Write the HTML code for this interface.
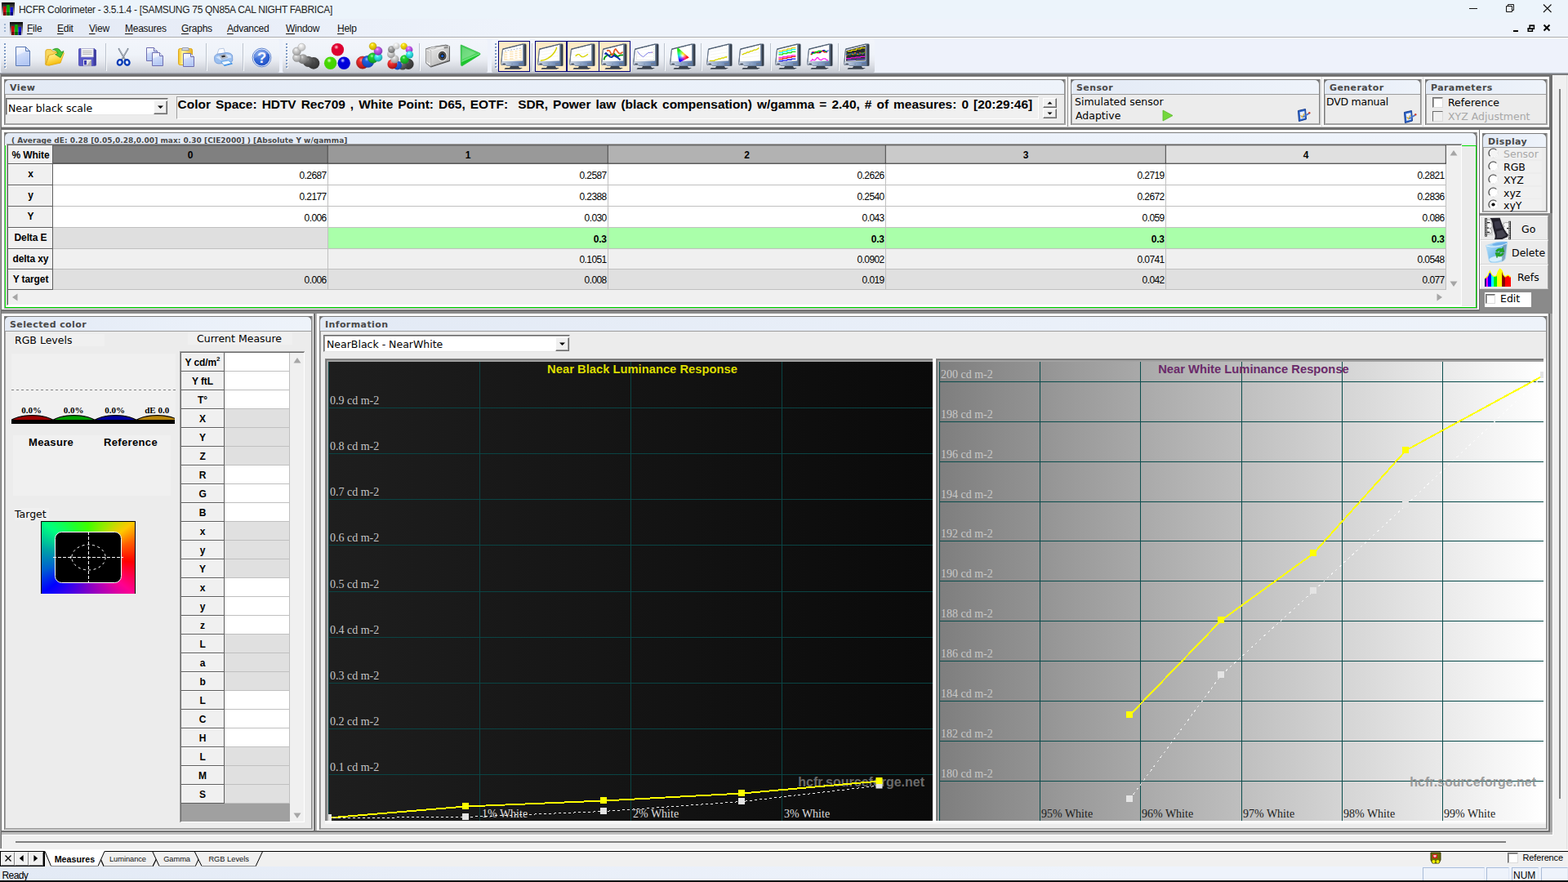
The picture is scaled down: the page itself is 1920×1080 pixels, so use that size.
<!DOCTYPE html>
<html><head><meta charset="utf-8"><title>HCFR Colorimeter - 3.5.1.4 - [SAMSUNG 75 QN85A CAL NIGHT FABRICA]</title>
<style>
html,body{margin:0;padding:0;width:1920px;height:1080px;overflow:hidden;background:#fff}
#root{position:relative;width:1920px;height:1080px;overflow:hidden;font-family:"Liberation Sans",sans-serif}
#root div{position:absolute;box-sizing:border-box}
.t{white-space:nowrap;line-height:1;color:#000}
.ui{font-family:"Liberation Sans",sans-serif}
.dv{font-family:"DejaVu Sans","Liberation Sans",sans-serif}
.sf{font-family:"Liberation Serif",serif}
.b{font-weight:bold}
u{text-decoration:underline;text-underline-offset:2px}
</style></head><body><div id="root">
<div style="left:0px;top:0px;width:1920px;height:23px;background:#ecf4fb;"></div>
<svg style="position:absolute;left:2px;top:3px;" width="16" height="16" viewBox="0 0 16 16"><defs><linearGradient id="ig2" x1="0" y1="0" x2="0" y2="1"><stop offset="0" stop-color="#000"/><stop offset="1" stop-color="#d8d8d8"/></linearGradient></defs>
<rect x="0" y="0" width="16" height="16" fill="url(#ig2)"/>
<rect x="2" y="5" width="3.4" height="11" fill="#c80000"/><rect x="2" y="12" width="3.4" height="4" fill="#700000"/>
<rect x="6.3" y="3" width="3.4" height="13" fill="#00b000"/><rect x="6.3" y="12" width="3.4" height="4" fill="#006000"/>
<rect x="10.6" y="6" width="3.4" height="10" fill="#1010d0"/><rect x="10.6" y="12" width="3.4" height="4" fill="#000080"/></svg>
<div class="t ui" style="left:23px;top:6px;font-size:12px;letter-spacing:-0.31px;color:#1c1c1c">HCFR Colorimeter - 3.5.1.4 - [SAMSUNG 75 QN85A CAL NIGHT FABRICA]</div>
<svg style="position:absolute;left:1795px;top:0px;" width="125" height="22" viewBox="0 0 125 22"><path d="M4 10.5h10" stroke="#111" stroke-width="1" fill="none"/>
<path d="M49.5 7.5h7v7h-7z M51.5 7.5v-2h7v7h-2" stroke="#111" stroke-width="1" fill="none"/>
<path d="M95 5.5l9.5 9.5 M104.5 5.5l-9.5 9.5" stroke="#111" stroke-width="1.1" fill="none"/></svg>
<div style="left:0px;top:23px;width:1920px;height:22px;background:linear-gradient(90deg,#e3e9f4 0px,#e9eef8 300px,#eef3fb 640px);"></div>
<div style="left:0px;top:45px;width:1920px;height:1px;background:#a9abae;"></div>
<div style="left:0px;top:46px;width:1920px;height:44px;background:#eef2fb;"></div>
<div style="left:0px;top:46px;width:1920px;height:1px;background:#ffffff;"></div>
<div style="left:5px;top:29px;width:2px;height:2px;background:#9fb3d0;"></div>
<div style="left:5px;top:33px;width:2px;height:2px;background:#9fb3d0;"></div>
<div style="left:5px;top:37px;width:2px;height:2px;background:#9fb3d0;"></div>
<svg style="position:absolute;left:12px;top:27px;" width="16" height="16" viewBox="0 0 16 16"><defs><linearGradient id="ig12" x1="0" y1="0" x2="0" y2="1"><stop offset="0" stop-color="#000"/><stop offset="1" stop-color="#d8d8d8"/></linearGradient></defs>
<rect x="0" y="0" width="16" height="16" fill="url(#ig12)"/>
<rect x="2" y="5" width="3.4" height="11" fill="#c80000"/><rect x="2" y="12" width="3.4" height="4" fill="#700000"/>
<rect x="6.3" y="3" width="3.4" height="13" fill="#00b000"/><rect x="6.3" y="12" width="3.4" height="4" fill="#006000"/>
<rect x="10.6" y="6" width="3.4" height="10" fill="#1010d0"/><rect x="10.6" y="12" width="3.4" height="4" fill="#000080"/></svg>
<div class="t ui" style="left:33px;top:29px;font-size:12px;letter-spacing:-0.25px;color:#111"><u>F</u>ile</div>
<div class="t ui" style="left:70px;top:29px;font-size:12px;letter-spacing:-0.25px;color:#111"><u>E</u>dit</div>
<div class="t ui" style="left:109px;top:29px;font-size:12px;letter-spacing:-0.25px;color:#111"><u>V</u>iew</div>
<div class="t ui" style="left:153px;top:29px;font-size:12px;letter-spacing:-0.25px;color:#111"><u>M</u>easures</div>
<div class="t ui" style="left:222px;top:29px;font-size:12px;letter-spacing:-0.25px;color:#111"><u>G</u>raphs</div>
<div class="t ui" style="left:278px;top:29px;font-size:12px;letter-spacing:-0.25px;color:#111"><u>A</u>dvanced</div>
<div class="t ui" style="left:350px;top:29px;font-size:12px;letter-spacing:-0.25px;color:#111"><u>W</u>indow</div>
<div class="t ui" style="left:413px;top:29px;font-size:12px;letter-spacing:-0.25px;color:#111"><u>H</u>elp</div>
<svg style="position:absolute;left:1850px;top:27px;" width="54" height="14" viewBox="0 0 54 14"><path d="M3 11h6" stroke="#000" stroke-width="2" fill="none"/>
<path d="M21.2 8.2h5.2v3h-5.2z M23.2 7.4v-3h5.2v3.8h-1.4" stroke="#000" stroke-width="1.5" fill="none"/><path d="M20.5 7.9h6.6 M22.5 4.1h6.6" stroke="#000" stroke-width="1.4"/>
<path d="M40.5 3.5l7 7 M47.5 3.5l-7 7" stroke="#000" stroke-width="2" fill="none"/></svg>
<div style="left:1px;top:48px;width:341px;height:41px;background:linear-gradient(#f2f5fb 0%,#eff3f9 45%,#e9ecf2 63%,#dadde4 80%,#cdd1d8 92%,#c6cad2 100%);border-radius:3px 3px 2px 2px;"></div>
<div style="left:6px;top:54px;width:2px;height:2px;background:#ffffff;"></div>
<div style="left:5px;top:53px;width:2px;height:2px;background:#7e9ac4;"></div>
<div style="left:6px;top:58px;width:2px;height:2px;background:#ffffff;"></div>
<div style="left:5px;top:57px;width:2px;height:2px;background:#7e9ac4;"></div>
<div style="left:6px;top:62px;width:2px;height:2px;background:#ffffff;"></div>
<div style="left:5px;top:61px;width:2px;height:2px;background:#7e9ac4;"></div>
<div style="left:6px;top:66px;width:2px;height:2px;background:#ffffff;"></div>
<div style="left:5px;top:65px;width:2px;height:2px;background:#7e9ac4;"></div>
<div style="left:6px;top:70px;width:2px;height:2px;background:#ffffff;"></div>
<div style="left:5px;top:69px;width:2px;height:2px;background:#7e9ac4;"></div>
<div style="left:6px;top:74px;width:2px;height:2px;background:#ffffff;"></div>
<div style="left:5px;top:73px;width:2px;height:2px;background:#7e9ac4;"></div>
<div style="left:6px;top:78px;width:2px;height:2px;background:#ffffff;"></div>
<div style="left:5px;top:77px;width:2px;height:2px;background:#7e9ac4;"></div>
<div style="left:6px;top:82px;width:2px;height:2px;background:#ffffff;"></div>
<div style="left:5px;top:81px;width:2px;height:2px;background:#7e9ac4;"></div>
<div style="left:346px;top:48px;width:251px;height:41px;background:linear-gradient(#f2f5fb 0%,#eff3f9 45%,#e9ecf2 63%,#dadde4 80%,#cdd1d8 92%,#c6cad2 100%);border-radius:3px 3px 2px 2px;"></div>
<div style="left:351px;top:54px;width:2px;height:2px;background:#ffffff;"></div>
<div style="left:350px;top:53px;width:2px;height:2px;background:#7e9ac4;"></div>
<div style="left:351px;top:58px;width:2px;height:2px;background:#ffffff;"></div>
<div style="left:350px;top:57px;width:2px;height:2px;background:#7e9ac4;"></div>
<div style="left:351px;top:62px;width:2px;height:2px;background:#ffffff;"></div>
<div style="left:350px;top:61px;width:2px;height:2px;background:#7e9ac4;"></div>
<div style="left:351px;top:66px;width:2px;height:2px;background:#ffffff;"></div>
<div style="left:350px;top:65px;width:2px;height:2px;background:#7e9ac4;"></div>
<div style="left:351px;top:70px;width:2px;height:2px;background:#ffffff;"></div>
<div style="left:350px;top:69px;width:2px;height:2px;background:#7e9ac4;"></div>
<div style="left:351px;top:74px;width:2px;height:2px;background:#ffffff;"></div>
<div style="left:350px;top:73px;width:2px;height:2px;background:#7e9ac4;"></div>
<div style="left:351px;top:78px;width:2px;height:2px;background:#ffffff;"></div>
<div style="left:350px;top:77px;width:2px;height:2px;background:#7e9ac4;"></div>
<div style="left:351px;top:82px;width:2px;height:2px;background:#ffffff;"></div>
<div style="left:350px;top:81px;width:2px;height:2px;background:#7e9ac4;"></div>
<div style="left:602px;top:48px;width:469px;height:41px;background:linear-gradient(#f2f5fb 0%,#eff3f9 45%,#e9ecf2 63%,#dadde4 80%,#cdd1d8 92%,#c6cad2 100%);border-radius:3px 3px 2px 2px;"></div>
<div style="left:607px;top:54px;width:2px;height:2px;background:#ffffff;"></div>
<div style="left:606px;top:53px;width:2px;height:2px;background:#7e9ac4;"></div>
<div style="left:607px;top:58px;width:2px;height:2px;background:#ffffff;"></div>
<div style="left:606px;top:57px;width:2px;height:2px;background:#7e9ac4;"></div>
<div style="left:607px;top:62px;width:2px;height:2px;background:#ffffff;"></div>
<div style="left:606px;top:61px;width:2px;height:2px;background:#7e9ac4;"></div>
<div style="left:607px;top:66px;width:2px;height:2px;background:#ffffff;"></div>
<div style="left:606px;top:65px;width:2px;height:2px;background:#7e9ac4;"></div>
<div style="left:607px;top:70px;width:2px;height:2px;background:#ffffff;"></div>
<div style="left:606px;top:69px;width:2px;height:2px;background:#7e9ac4;"></div>
<div style="left:607px;top:74px;width:2px;height:2px;background:#ffffff;"></div>
<div style="left:606px;top:73px;width:2px;height:2px;background:#7e9ac4;"></div>
<div style="left:607px;top:78px;width:2px;height:2px;background:#ffffff;"></div>
<div style="left:606px;top:77px;width:2px;height:2px;background:#7e9ac4;"></div>
<div style="left:607px;top:82px;width:2px;height:2px;background:#ffffff;"></div>
<div style="left:606px;top:81px;width:2px;height:2px;background:#7e9ac4;"></div>
<div style="left:129px;top:53px;width:1px;height:33px;background:#bcc3ce;"></div>
<div style="left:130px;top:54px;width:1px;height:33px;background:#f8fafc;"></div>
<div style="left:252px;top:53px;width:1px;height:33px;background:#bcc3ce;"></div>
<div style="left:253px;top:54px;width:1px;height:33px;background:#f8fafc;"></div>
<div style="left:297px;top:53px;width:1px;height:33px;background:#bcc3ce;"></div>
<div style="left:298px;top:54px;width:1px;height:33px;background:#f8fafc;"></div>
<div style="left:513px;top:53px;width:1px;height:33px;background:#bcc3ce;"></div>
<div style="left:514px;top:54px;width:1px;height:33px;background:#f8fafc;"></div>
<div style="left:651px;top:53px;width:1px;height:33px;background:#bcc3ce;"></div>
<div style="left:652px;top:54px;width:1px;height:33px;background:#f8fafc;"></div>
<div style="left:813px;top:53px;width:1px;height:33px;background:#bcc3ce;"></div>
<div style="left:814px;top:54px;width:1px;height:33px;background:#f8fafc;"></div>
<div style="left:858px;top:53px;width:1px;height:33px;background:#bcc3ce;"></div>
<div style="left:859px;top:54px;width:1px;height:33px;background:#f8fafc;"></div>
<div style="left:943px;top:53px;width:1px;height:33px;background:#bcc3ce;"></div>
<div style="left:944px;top:54px;width:1px;height:33px;background:#f8fafc;"></div>
<div style="left:1026px;top:53px;width:1px;height:33px;background:#bcc3ce;"></div>
<div style="left:1027px;top:54px;width:1px;height:33px;background:#f8fafc;"></div>
<div style="left:610px;top:50px;width:39px;height:38px;background:#fdeac6;border:1px solid #00007a;box-sizing:border-box;"></div>
<div style="left:655px;top:50px;width:39px;height:38px;background:#fdeac6;border:1px solid #00007a;box-sizing:border-box;"></div>
<div style="left:694px;top:50px;width:40px;height:38px;background:#fdeac6;border:1px solid #00007a;box-sizing:border-box;"></div>
<div style="left:733px;top:50px;width:39px;height:38px;background:#fdeac6;border:1px solid #00007a;box-sizing:border-box;"></div>
<div style="left:0px;top:89px;width:1920px;height:1px;background:#a4a9b2;"></div>
<div style="left:0px;top:90px;width:1920px;height:1px;background:#85888e;"></div>
<div style="left:0px;top:91px;width:1920px;height:3px;background:linear-gradient(#747474,#6c6c6c 50%,#8a8a8a);"></div>
<div style="left:0px;top:94px;width:1920px;height:986px;background:#ffffff;"></div>
<div style="left:0px;top:91px;width:1px;height:950px;background:#a0a0a0;"></div>
<div style="left:1px;top:91px;width:1px;height:950px;background:#6e6e6e;"></div>
<div style="left:5px;top:97px;width:1300px;height:57px;background:#7c7c7c;"></div>
<div style="left:6px;top:98px;width:1297px;height:54px;background:#ececec;"></div>
<div style="left:1303px;top:98px;width:1px;height:55px;background:#909090;"></div>
<div style="left:1304px;top:97px;width:1px;height:57px;background:#a8a8a8;"></div>
<div style="left:6px;top:151px;width:1298px;height:2px;background:#a4a4a4;"></div>
<div style="left:5px;top:153px;width:1300px;height:1px;background:#ffffff;"></div>
<div style="left:5px;top:97px;width:1px;height:56px;background:#808080;"></div>
<div style="left:6px;top:115px;width:1px;height:37px;background:#a8a8a8;"></div>
<div style="left:6px;top:98px;width:1297px;height:17px;background:#707070;"></div>
<div style="left:6px;top:98px;width:1297px;height:17px;background:linear-gradient(90deg,#e3eaf5,#eaf0f9 60%,#eef3fa);border-radius:5px 5px 0 0;"></div>
<div style="left:6px;top:115px;width:1297px;height:1px;background:#9c9c9c;"></div>
<div class="t dv b" style="left:12px;top:102px;font-size:11px;letter-spacing:0.4px;color:#484848">View</div>
<div style="left:7px;top:120px;width:199px;height:21px;background:#ffffff;border:1px solid #e6e6e6;border-top:1px solid #6a6a6a;border-left:1px solid #6a6a6a;"></div>
<div style="left:8px;top:121px;width:197px;height:1px;background:#a0a0a0;"></div>
<div style="left:8px;top:121px;width:1px;height:19px;background:#a0a0a0;"></div>
<div class="t dv" style="left:10px;top:127px;font-size:12.5px;">Near black scale</div>
<div style="left:188px;top:123px;width:17px;height:17px;background:#f0f0f0;border:1px solid #fff;border-right-color:#696969;border-bottom-color:#696969;"></div>
<div style="left:189px;top:138px;width:15px;height:1px;background:#a0a0a0;"></div>
<div style="left:203px;top:124px;width:1px;height:15px;background:#a0a0a0;"></div>
<svg style="position:absolute;left:192px;top:129px;" width="9" height="5" viewBox="0 0 8 5"><path d="M0.5 0.5h7l-3.5 3.5z" fill="#000"/></svg>
<div style="left:216px;top:118px;width:1056px;height:28px;background:#f0f0f0;border:1px solid #fff;border-top-color:#a0a0a0;border-left-color:#a0a0a0;"></div>
<div class="t ui b" style="left:217.6px;top:119.7px;font-size:15.45px;word-spacing:1.77px;">Color Space: HDTV Rec709 , White Point: D65, EOTF:&nbsp; SDR, Power law (black compensation) w/gamma = 2.40, # of measures: 0 [20:29:46]</div>
<div style="left:1277px;top:120px;width:17px;height:12px;background:#f0f0f0;border:1px solid #fff;border-right-color:#696969;border-bottom-color:#696969;"></div>
<div style="left:1278px;top:130px;width:15px;height:1px;background:#a0a0a0;"></div>
<div style="left:1292px;top:121px;width:1px;height:10px;background:#a0a0a0;"></div>
<svg style="position:absolute;left:1282px;top:124px;" width="7" height="4" viewBox="0 0 7 4"><path d="M0.5 3.5h6l-3-3z" fill="#000"/></svg>
<div style="left:1277px;top:133px;width:17px;height:12px;background:#f0f0f0;border:1px solid #fff;border-right-color:#696969;border-bottom-color:#696969;"></div>
<div style="left:1278px;top:143px;width:15px;height:1px;background:#a0a0a0;"></div>
<div style="left:1292px;top:134px;width:1px;height:10px;background:#a0a0a0;"></div>
<svg style="position:absolute;left:1282px;top:137px;" width="7" height="4" viewBox="0 0 7 4"><path d="M0.5 0.5h6l-3 3z" fill="#000"/></svg>
<div style="left:1307px;top:94px;width:1px;height:62px;background:#8a8a8a;"></div>
<div style="left:1311px;top:97px;width:306px;height:57px;background:#7c7c7c;"></div>
<div style="left:1312px;top:98px;width:303px;height:54px;background:#ececec;"></div>
<div style="left:1615px;top:98px;width:1px;height:55px;background:#909090;"></div>
<div style="left:1616px;top:97px;width:1px;height:57px;background:#a8a8a8;"></div>
<div style="left:1312px;top:151px;width:304px;height:2px;background:#a4a4a4;"></div>
<div style="left:1311px;top:153px;width:306px;height:1px;background:#ffffff;"></div>
<div style="left:1311px;top:97px;width:1px;height:56px;background:#808080;"></div>
<div style="left:1312px;top:115px;width:1px;height:37px;background:#a8a8a8;"></div>
<div style="left:1312px;top:98px;width:303px;height:17px;background:#707070;"></div>
<div style="left:1312px;top:98px;width:303px;height:17px;background:linear-gradient(90deg,#e3eaf5,#eaf0f9 60%,#eef3fa);border-radius:5px 5px 0 0;"></div>
<div style="left:1312px;top:115px;width:303px;height:1px;background:#9c9c9c;"></div>
<div class="t dv b" style="left:1318px;top:102px;font-size:11px;letter-spacing:0.4px;color:#484848">Sensor</div>
<div class="t dv" style="left:1316px;top:119px;font-size:12.5px;">Simulated sensor</div>
<div class="t dv" style="left:1317px;top:136px;font-size:12.5px;">Adaptive</div>
<svg style="position:absolute;left:1423px;top:134px;" width="14" height="15" viewBox="0 0 14 15"><path d="M1 1 L13 7.5 L1 14 Z" fill="#74d83c" stroke="#5cb82c" stroke-width="0.8"/></svg>
<svg style="position:absolute;left:1587px;top:132px;" width="18" height="18" viewBox="0 0 18 18"><path d="M2.5 3.5 L11.5 1.5 L12.5 14 L3.5 16.5 Z" fill="#2a62c8" stroke="#1a3e90" stroke-width="1"/>
<path d="M4.6 5.2 L10.3 4 L11 12.6 L5.4 14 Z" fill="#e8eefc"/>
<path d="M5.6 9.2 L7.6 11.6 L10.2 7" stroke="#d8b040" stroke-width="1.4" fill="none"/>
<path d="M8.5 11.5 L16 6.8" stroke="#4a78d0" stroke-width="1.8"/><circle cx="16.3" cy="6.3" r="1.2" fill="#d04030"/></svg>
<div style="left:1618px;top:94px;width:1px;height:62px;background:#d8d8d8;"></div>
<div style="left:1621px;top:97px;width:120px;height:57px;background:#7c7c7c;"></div>
<div style="left:1622px;top:98px;width:117px;height:54px;background:#ececec;"></div>
<div style="left:1739px;top:98px;width:1px;height:55px;background:#909090;"></div>
<div style="left:1740px;top:97px;width:1px;height:57px;background:#a8a8a8;"></div>
<div style="left:1622px;top:151px;width:118px;height:2px;background:#a4a4a4;"></div>
<div style="left:1621px;top:153px;width:120px;height:1px;background:#ffffff;"></div>
<div style="left:1621px;top:97px;width:1px;height:56px;background:#808080;"></div>
<div style="left:1622px;top:115px;width:1px;height:37px;background:#a8a8a8;"></div>
<div style="left:1622px;top:98px;width:117px;height:17px;background:#707070;"></div>
<div style="left:1622px;top:98px;width:117px;height:17px;background:linear-gradient(90deg,#e3eaf5,#eaf0f9 60%,#eef3fa);border-radius:5px 5px 0 0;"></div>
<div style="left:1622px;top:115px;width:117px;height:1px;background:#9c9c9c;"></div>
<div class="t dv b" style="left:1628px;top:102px;font-size:11px;letter-spacing:0.4px;color:#484848">Generator</div>
<div class="t dv" style="left:1624px;top:119px;font-size:12.5px;letter-spacing:-0.25px">DVD manual</div>
<svg style="position:absolute;left:1717px;top:134px;" width="18" height="18" viewBox="0 0 18 18"><path d="M2.5 3.5 L11.5 1.5 L12.5 14 L3.5 16.5 Z" fill="#2a62c8" stroke="#1a3e90" stroke-width="1"/>
<path d="M4.6 5.2 L10.3 4 L11 12.6 L5.4 14 Z" fill="#e8eefc"/>
<path d="M5.6 9.2 L7.6 11.6 L10.2 7" stroke="#d8b040" stroke-width="1.4" fill="none"/>
<path d="M8.5 11.5 L16 6.8" stroke="#4a78d0" stroke-width="1.8"/><circle cx="16.3" cy="6.3" r="1.2" fill="#d04030"/></svg>
<div style="left:1742px;top:94px;width:1px;height:62px;background:#d8d8d8;"></div>
<div style="left:1745px;top:97px;width:150px;height:57px;background:#7c7c7c;"></div>
<div style="left:1746px;top:98px;width:147px;height:54px;background:#ececec;"></div>
<div style="left:1893px;top:98px;width:1px;height:55px;background:#909090;"></div>
<div style="left:1894px;top:97px;width:1px;height:57px;background:#a8a8a8;"></div>
<div style="left:1746px;top:151px;width:148px;height:2px;background:#a4a4a4;"></div>
<div style="left:1745px;top:153px;width:150px;height:1px;background:#ffffff;"></div>
<div style="left:1745px;top:97px;width:1px;height:56px;background:#808080;"></div>
<div style="left:1746px;top:115px;width:1px;height:37px;background:#a8a8a8;"></div>
<div style="left:1746px;top:98px;width:147px;height:17px;background:#707070;"></div>
<div style="left:1746px;top:98px;width:147px;height:17px;background:linear-gradient(90deg,#e3eaf5,#eaf0f9 60%,#eef3fa);border-radius:5px 5px 0 0;"></div>
<div style="left:1746px;top:115px;width:147px;height:1px;background:#9c9c9c;"></div>
<div class="t dv b" style="left:1752px;top:102px;font-size:11px;letter-spacing:0.4px;color:#484848">Parameters</div>
<div style="left:1754px;top:119px;width:13px;height:13px;background:#ffffff;border:1px solid #dcdcdc;border-top-color:#6a6a6a;border-left-color:#6a6a6a;"></div>
<div style="left:1755px;top:120px;width:11px;height:1px;background:#a0a0a0;"></div>
<div style="left:1755px;top:120px;width:1px;height:11px;background:#a0a0a0;"></div>
<div class="t dv" style="left:1773px;top:120px;font-size:12.5px;">Reference</div>
<div style="left:1754px;top:136px;width:13px;height:13px;background:#f0f0f0;border:1px solid #dcdcdc;border-top-color:#6a6a6a;border-left-color:#6a6a6a;"></div>
<div class="t dv" style="left:1773px;top:137px;font-size:12.5px;color:#a8a8a8;">XYZ Adjustment</div>
<div style="left:2px;top:155px;width:1896px;height:1px;background:#c8c8c8;"></div>
<div style="left:2px;top:156px;width:1896px;height:3px;background:#707070;"></div>
<div style="left:1895px;top:94px;width:2px;height:61px;background:#ffffff;"></div>
<div style="left:1895px;top:159px;width:2px;height:102px;background:#ffffff;"></div>
<div style="left:1897px;top:91px;width:4px;height:293px;background:#707070;"></div>
<div style="left:5px;top:162px;width:1804px;height:216px;background:#7c7c7c;"></div>
<div style="left:6px;top:163px;width:1801px;height:213px;background:#ececec;"></div>
<div style="left:1807px;top:163px;width:1px;height:214px;background:#909090;"></div>
<div style="left:1808px;top:162px;width:1px;height:216px;background:#a8a8a8;"></div>
<div style="left:6px;top:375px;width:1802px;height:2px;background:#a4a4a4;"></div>
<div style="left:5px;top:377px;width:1804px;height:1px;background:#ffffff;"></div>
<div style="left:5px;top:162px;width:1px;height:215px;background:#808080;"></div>
<div style="left:6px;top:177px;width:1px;height:199px;background:#a8a8a8;"></div>
<div style="left:6px;top:163px;width:1801px;height:14px;background:#707070;"></div>
<div style="left:6px;top:163px;width:1801px;height:14px;background:linear-gradient(90deg,#e3eaf5,#eaf0f9 60%,#eef3fa);border-radius:5px 5px 0 0;"></div>
<div style="left:6px;top:177px;width:1801px;height:1px;background:#9c9c9c;"></div>
<div class="t dv b" style="left:14px;top:168px;font-size:9px;color:#484848;letter-spacing:0.025px">( Average dE: 0.28 [0.05,0.28,0.00] max: 0.30 [CIE2000] ) [Absolute Y w/gamma]</div>
<div style="left:6px;top:176px;width:1801px;height:200px;background:#ffffff;"></div>
<div style="left:1790px;top:179px;width:17px;height:196px;background:#ebebeb;"></div>
<div style="left:1790px;top:176px;width:17px;height:2px;background:#eaf0f9;"></div>
<div style="left:1790px;top:178px;width:18px;height:1px;background:#00e000;"></div>
<div style="left:6px;top:178px;width:1px;height:199px;background:#00e000;"></div>
<div style="left:1807px;top:178px;width:1px;height:199px;background:#00e000;"></div>
<div style="left:5px;top:178px;width:1px;height:200px;background:#a0a0a0;"></div>
<div style="left:1808px;top:166px;width:1px;height:212px;background:#7a7a7a;"></div>
<div style="left:8px;top:176px;width:1782px;height:198px;background:#f0f0f0;border-top:2px solid #808080;border-left:2px solid #808080;border-right:1px solid #fff;border-bottom:1px solid #fff;"></div>
<div style="left:9px;top:177px;width:1780px;height:1px;background:#696969;"></div>
<div style="left:9px;top:177px;width:1px;height:196px;background:#696969;"></div>
<div style="left:8px;top:176px;width:1782px;height:1px;background:#a0a0a0;"></div>
<div style="left:8px;top:176px;width:1px;height:198px;background:#a0a0a0;"></div>
<div style="left:10px;top:178px;width:55px;height:23px;background:#f0f0f0;"></div>
<div class="t ui b" style="left:10px;top:184px;width:55px;text-align:center;font-size:12px;letter-spacing:-0.1px">% White</div>
<div style="left:65px;top:178px;width:336px;height:22px;background:#808080;"></div>
<div class="t ui b" style="left:65px;top:184px;width:336px;text-align:center;font-size:12px;">0</div>
<div style="left:401px;top:178px;width:1px;height:22px;background:#5e5e5e;"></div>
<div style="left:400px;top:178px;width:1px;height:22px;background:rgba(0,0,0,0.12);"></div>
<div style="left:402px;top:178px;width:342px;height:22px;background:#999999;"></div>
<div class="t ui b" style="left:402px;top:184px;width:342px;text-align:center;font-size:12px;">1</div>
<div style="left:744px;top:178px;width:1px;height:22px;background:#5e5e5e;"></div>
<div style="left:743px;top:178px;width:1px;height:22px;background:rgba(0,0,0,0.12);"></div>
<div style="left:745px;top:178px;width:339px;height:22px;background:#b2b2b2;"></div>
<div class="t ui b" style="left:745px;top:184px;width:339px;text-align:center;font-size:12px;">2</div>
<div style="left:1084px;top:178px;width:1px;height:22px;background:#5e5e5e;"></div>
<div style="left:1083px;top:178px;width:1px;height:22px;background:rgba(0,0,0,0.12);"></div>
<div style="left:1085px;top:178px;width:342px;height:22px;background:#cacaca;"></div>
<div class="t ui b" style="left:1085px;top:184px;width:342px;text-align:center;font-size:12px;">3</div>
<div style="left:1427px;top:178px;width:1px;height:22px;background:#5e5e5e;"></div>
<div style="left:1426px;top:178px;width:1px;height:22px;background:rgba(0,0,0,0.12);"></div>
<div style="left:1428px;top:178px;width:342px;height:22px;background:#e0e0e0;"></div>
<div class="t ui b" style="left:1428px;top:184px;width:342px;text-align:center;font-size:12px;">4</div>
<div style="left:1770px;top:178px;width:1px;height:22px;background:#5e5e5e;"></div>
<div style="left:1769px;top:178px;width:1px;height:22px;background:rgba(0,0,0,0.12);"></div>
<div style="left:65px;top:199px;width:1706px;height:1px;background:rgba(0,0,0,0.25);"></div>
<div style="left:65px;top:200px;width:1706px;height:1px;background:#5e5e5e;"></div>
<div style="left:65px;top:178px;width:1706px;height:1px;background:rgba(0,0,0,0.18);"></div>
<div style="left:65px;top:201px;width:336px;height:25px;background:#ffffff;"></div>
<div class="t ui" style="right:1520.4px;top:209px;font-size:12px;letter-spacing:-0.6px;">0.2687</div>
<div style="left:401px;top:201px;width:1px;height:25px;background:#c0c0c0;"></div>
<div style="left:402px;top:201px;width:342px;height:25px;background:#ffffff;"></div>
<div class="t ui" style="right:1177.4px;top:209px;font-size:12px;letter-spacing:-0.6px;">0.2587</div>
<div style="left:744px;top:201px;width:1px;height:25px;background:#c0c0c0;"></div>
<div style="left:745px;top:201px;width:339px;height:25px;background:#ffffff;"></div>
<div class="t ui" style="right:837.4000000000001px;top:209px;font-size:12px;letter-spacing:-0.6px;">0.2626</div>
<div style="left:1084px;top:201px;width:1px;height:25px;background:#c0c0c0;"></div>
<div style="left:1085px;top:201px;width:342px;height:25px;background:#ffffff;"></div>
<div class="t ui" style="right:494.4000000000001px;top:209px;font-size:12px;letter-spacing:-0.6px;">0.2719</div>
<div style="left:1427px;top:201px;width:1px;height:25px;background:#c0c0c0;"></div>
<div style="left:1428px;top:201px;width:342px;height:25px;background:#ffffff;"></div>
<div class="t ui" style="right:151.4000000000001px;top:209px;font-size:12px;letter-spacing:-0.6px;">0.2821</div>
<div style="left:1770px;top:201px;width:1px;height:25px;background:#c0c0c0;"></div>
<div style="left:65px;top:226px;width:1706px;height:1px;background:#c0c0c0;"></div>
<div style="left:10px;top:201px;width:54px;height:25px;background:#f0f0f0;"></div>
<div style="left:10px;top:201px;width:54px;height:1px;background:#ffffff;"></div>
<div class="t ui b" style="left:10px;top:207px;width:55px;text-align:center;font-size:12px;letter-spacing:-0.1px">x</div>
<div style="left:10px;top:226px;width:55px;height:1px;background:#5e5e5e;"></div>
<div style="left:65px;top:227px;width:336px;height:25px;background:#ffffff;"></div>
<div class="t ui" style="right:1520.4px;top:235px;font-size:12px;letter-spacing:-0.6px;">0.2177</div>
<div style="left:401px;top:227px;width:1px;height:25px;background:#c0c0c0;"></div>
<div style="left:402px;top:227px;width:342px;height:25px;background:#ffffff;"></div>
<div class="t ui" style="right:1177.4px;top:235px;font-size:12px;letter-spacing:-0.6px;">0.2388</div>
<div style="left:744px;top:227px;width:1px;height:25px;background:#c0c0c0;"></div>
<div style="left:745px;top:227px;width:339px;height:25px;background:#ffffff;"></div>
<div class="t ui" style="right:837.4000000000001px;top:235px;font-size:12px;letter-spacing:-0.6px;">0.2540</div>
<div style="left:1084px;top:227px;width:1px;height:25px;background:#c0c0c0;"></div>
<div style="left:1085px;top:227px;width:342px;height:25px;background:#ffffff;"></div>
<div class="t ui" style="right:494.4000000000001px;top:235px;font-size:12px;letter-spacing:-0.6px;">0.2672</div>
<div style="left:1427px;top:227px;width:1px;height:25px;background:#c0c0c0;"></div>
<div style="left:1428px;top:227px;width:342px;height:25px;background:#ffffff;"></div>
<div class="t ui" style="right:151.4000000000001px;top:235px;font-size:12px;letter-spacing:-0.6px;">0.2836</div>
<div style="left:1770px;top:227px;width:1px;height:25px;background:#c0c0c0;"></div>
<div style="left:65px;top:252px;width:1706px;height:1px;background:#c0c0c0;"></div>
<div style="left:10px;top:227px;width:54px;height:25px;background:#f0f0f0;"></div>
<div style="left:10px;top:227px;width:54px;height:1px;background:#ffffff;"></div>
<div class="t ui b" style="left:10px;top:233px;width:55px;text-align:center;font-size:12px;letter-spacing:-0.1px">y</div>
<div style="left:10px;top:252px;width:55px;height:1px;background:#5e5e5e;"></div>
<div style="left:65px;top:253px;width:336px;height:25px;background:#ffffff;"></div>
<div class="t ui" style="right:1520.4px;top:261px;font-size:12px;letter-spacing:-0.6px;">0.006</div>
<div style="left:401px;top:253px;width:1px;height:25px;background:#c0c0c0;"></div>
<div style="left:402px;top:253px;width:342px;height:25px;background:#ffffff;"></div>
<div class="t ui" style="right:1177.4px;top:261px;font-size:12px;letter-spacing:-0.6px;">0.030</div>
<div style="left:744px;top:253px;width:1px;height:25px;background:#c0c0c0;"></div>
<div style="left:745px;top:253px;width:339px;height:25px;background:#ffffff;"></div>
<div class="t ui" style="right:837.4000000000001px;top:261px;font-size:12px;letter-spacing:-0.6px;">0.043</div>
<div style="left:1084px;top:253px;width:1px;height:25px;background:#c0c0c0;"></div>
<div style="left:1085px;top:253px;width:342px;height:25px;background:#ffffff;"></div>
<div class="t ui" style="right:494.4000000000001px;top:261px;font-size:12px;letter-spacing:-0.6px;">0.059</div>
<div style="left:1427px;top:253px;width:1px;height:25px;background:#c0c0c0;"></div>
<div style="left:1428px;top:253px;width:342px;height:25px;background:#ffffff;"></div>
<div class="t ui" style="right:151.4000000000001px;top:261px;font-size:12px;letter-spacing:-0.6px;">0.086</div>
<div style="left:1770px;top:253px;width:1px;height:25px;background:#c0c0c0;"></div>
<div style="left:65px;top:278px;width:1706px;height:1px;background:#c0c0c0;"></div>
<div style="left:10px;top:253px;width:54px;height:25px;background:#f0f0f0;"></div>
<div style="left:10px;top:253px;width:54px;height:1px;background:#ffffff;"></div>
<div class="t ui b" style="left:10px;top:259px;width:55px;text-align:center;font-size:12px;letter-spacing:-0.1px">Y</div>
<div style="left:10px;top:278px;width:55px;height:1px;background:#5e5e5e;"></div>
<div style="left:65px;top:279px;width:336px;height:25px;background:#dfdfdf;"></div>
<div style="left:401px;top:279px;width:1px;height:25px;background:#c0c0c0;"></div>
<div style="left:402px;top:279px;width:342px;height:25px;background:#aaffaa;"></div>
<div class="t ui b" style="right:1177.4px;top:287px;font-size:12px;letter-spacing:-0.3px;">0.3</div>
<div style="left:744px;top:279px;width:1px;height:25px;background:#c0c0c0;"></div>
<div style="left:745px;top:279px;width:339px;height:25px;background:#aaffaa;"></div>
<div class="t ui b" style="right:837.4000000000001px;top:287px;font-size:12px;letter-spacing:-0.3px;">0.3</div>
<div style="left:1084px;top:279px;width:1px;height:25px;background:#c0c0c0;"></div>
<div style="left:1085px;top:279px;width:342px;height:25px;background:#aaffaa;"></div>
<div class="t ui b" style="right:494.4000000000001px;top:287px;font-size:12px;letter-spacing:-0.3px;">0.3</div>
<div style="left:1427px;top:279px;width:1px;height:25px;background:#c0c0c0;"></div>
<div style="left:1428px;top:279px;width:342px;height:25px;background:#aaffaa;"></div>
<div class="t ui b" style="right:151.4000000000001px;top:287px;font-size:12px;letter-spacing:-0.3px;">0.3</div>
<div style="left:1770px;top:279px;width:1px;height:25px;background:#c0c0c0;"></div>
<div style="left:65px;top:304px;width:1706px;height:1px;background:#c0c0c0;"></div>
<div style="left:10px;top:279px;width:54px;height:25px;background:#f0f0f0;"></div>
<div style="left:10px;top:279px;width:54px;height:1px;background:#ffffff;"></div>
<div class="t ui b" style="left:10px;top:285px;width:55px;text-align:center;font-size:12px;letter-spacing:-0.1px">Delta E</div>
<div style="left:10px;top:304px;width:55px;height:1px;background:#5e5e5e;"></div>
<div style="left:65px;top:305px;width:336px;height:24px;background:#f0f0f0;"></div>
<div style="left:401px;top:305px;width:1px;height:24px;background:#c0c0c0;"></div>
<div style="left:402px;top:305px;width:342px;height:24px;background:#f0f0f0;"></div>
<div class="t ui" style="right:1177.4px;top:312px;font-size:12px;letter-spacing:-0.6px;">0.1051</div>
<div style="left:744px;top:305px;width:1px;height:24px;background:#c0c0c0;"></div>
<div style="left:745px;top:305px;width:339px;height:24px;background:#f0f0f0;"></div>
<div class="t ui" style="right:837.4000000000001px;top:312px;font-size:12px;letter-spacing:-0.6px;">0.0902</div>
<div style="left:1084px;top:305px;width:1px;height:24px;background:#c0c0c0;"></div>
<div style="left:1085px;top:305px;width:342px;height:24px;background:#f0f0f0;"></div>
<div class="t ui" style="right:494.4000000000001px;top:312px;font-size:12px;letter-spacing:-0.6px;">0.0741</div>
<div style="left:1427px;top:305px;width:1px;height:24px;background:#c0c0c0;"></div>
<div style="left:1428px;top:305px;width:342px;height:24px;background:#f0f0f0;"></div>
<div class="t ui" style="right:151.4000000000001px;top:312px;font-size:12px;letter-spacing:-0.6px;">0.0548</div>
<div style="left:1770px;top:305px;width:1px;height:24px;background:#c0c0c0;"></div>
<div style="left:65px;top:329px;width:1706px;height:1px;background:#c0c0c0;"></div>
<div style="left:10px;top:305px;width:54px;height:24px;background:#f0f0f0;"></div>
<div style="left:10px;top:305px;width:54px;height:1px;background:#ffffff;"></div>
<div class="t ui b" style="left:10px;top:311px;width:55px;text-align:center;font-size:12px;letter-spacing:-0.1px">delta xy</div>
<div style="left:10px;top:329px;width:55px;height:1px;background:#5e5e5e;"></div>
<div style="left:65px;top:330px;width:336px;height:24px;background:#e0e0e0;"></div>
<div class="t ui" style="right:1520.4px;top:337px;font-size:12px;letter-spacing:-0.6px;">0.006</div>
<div style="left:401px;top:330px;width:1px;height:24px;background:#c0c0c0;"></div>
<div style="left:402px;top:330px;width:342px;height:24px;background:#e0e0e0;"></div>
<div class="t ui" style="right:1177.4px;top:337px;font-size:12px;letter-spacing:-0.6px;">0.008</div>
<div style="left:744px;top:330px;width:1px;height:24px;background:#c0c0c0;"></div>
<div style="left:745px;top:330px;width:339px;height:24px;background:#e0e0e0;"></div>
<div class="t ui" style="right:837.4000000000001px;top:337px;font-size:12px;letter-spacing:-0.6px;">0.019</div>
<div style="left:1084px;top:330px;width:1px;height:24px;background:#c0c0c0;"></div>
<div style="left:1085px;top:330px;width:342px;height:24px;background:#e0e0e0;"></div>
<div class="t ui" style="right:494.4000000000001px;top:337px;font-size:12px;letter-spacing:-0.6px;">0.042</div>
<div style="left:1427px;top:330px;width:1px;height:24px;background:#c0c0c0;"></div>
<div style="left:1428px;top:330px;width:342px;height:24px;background:#e0e0e0;"></div>
<div class="t ui" style="right:151.4000000000001px;top:337px;font-size:12px;letter-spacing:-0.6px;">0.077</div>
<div style="left:1770px;top:330px;width:1px;height:24px;background:#c0c0c0;"></div>
<div style="left:65px;top:354px;width:1706px;height:1px;background:#c0c0c0;"></div>
<div style="left:10px;top:330px;width:54px;height:24px;background:#f0f0f0;"></div>
<div style="left:10px;top:330px;width:54px;height:1px;background:#ffffff;"></div>
<div class="t ui b" style="left:10px;top:336px;width:55px;text-align:center;font-size:12px;letter-spacing:-0.1px">Y target</div>
<div style="left:10px;top:354px;width:55px;height:1px;background:#5e5e5e;"></div>
<div style="left:10px;top:200px;width:55px;height:1px;background:#5e5e5e;"></div>
<div style="left:64px;top:178px;width:1px;height:177px;background:#5e5e5e;"></div>
<div style="left:1771px;top:178px;width:18px;height:177px;background:#f0f0f0;"></div>
<div style="left:10px;top:355px;width:1779px;height:18px;background:#f0f0f0;"></div>
<svg style="position:absolute;left:1775px;top:183px;" width="10" height="8" viewBox="0 0 10 8"><path d="M0.5 7.5 L5 1 L9.5 7.5 Z" fill="#a6a6a6"/></svg>
<svg style="position:absolute;left:1775px;top:344px;" width="10" height="8" viewBox="0 0 10 8"><path d="M0.5 0.5 L5 7 L9.5 0.5 Z" fill="#a6a6a6"/></svg>
<svg style="position:absolute;left:14px;top:359px;" width="8" height="10" viewBox="0 0 8 10"><path d="M7.5 0.5 L1 5 L7.5 9.5 Z" fill="#a6a6a6"/></svg>
<svg style="position:absolute;left:1759px;top:359px;" width="8" height="10" viewBox="0 0 8 10"><path d="M0.5 0.5 L7 5 L0.5 9.5 Z" fill="#a6a6a6"/></svg>
<div style="left:6px;top:376px;width:1802px;height:1px;background:#00e000;"></div>
<div style="left:5px;top:377px;width:1804px;height:1px;background:#a0a0a0;"></div>
<div style="left:5px;top:378px;width:1806px;height:1px;background:#ffffff;"></div>
<div style="left:2px;top:379px;width:1896px;height:2px;background:#707070;"></div>
<div style="left:2px;top:381px;width:1896px;height:3px;background:#8a8a8a;"></div>
<div style="left:1809px;top:159px;width:2px;height:220px;background:#ffffff;"></div>
<div style="left:1811px;top:159px;width:1px;height:222px;background:#707070;"></div>
<div style="left:1812px;top:159px;width:86px;height:222px;background:#ffffff;"></div>
<div style="left:1815px;top:163px;width:80px;height:98px;background:#7c7c7c;"></div>
<div style="left:1816px;top:164px;width:77px;height:95px;background:#ececec;"></div>
<div style="left:1893px;top:164px;width:1px;height:96px;background:#909090;"></div>
<div style="left:1894px;top:163px;width:1px;height:98px;background:#a8a8a8;"></div>
<div style="left:1816px;top:258px;width:78px;height:2px;background:#a4a4a4;"></div>
<div style="left:1815px;top:260px;width:80px;height:1px;background:#ffffff;"></div>
<div style="left:1815px;top:163px;width:1px;height:97px;background:#808080;"></div>
<div style="left:1816px;top:180px;width:1px;height:79px;background:#a8a8a8;"></div>
<div style="left:1816px;top:164px;width:77px;height:16px;background:#707070;"></div>
<div style="left:1816px;top:164px;width:77px;height:16px;background:linear-gradient(90deg,#e3eaf5,#eaf0f9 60%,#eef3fa);border-radius:5px 5px 0 0;"></div>
<div style="left:1816px;top:180px;width:77px;height:1px;background:#9c9c9c;"></div>
<div class="t dv b" style="left:1822px;top:168px;font-size:11px;letter-spacing:0.4px;color:#484848">Display</div>
<div style="left:1822px;top:181px;width:66px;height:14px;background:#f0f0f0;"></div>
<svg style="position:absolute;left:1822px;top:181px;" width="13" height="13" viewBox="0 0 13 13"><circle cx="6.5" cy="6.5" r="5.5" fill="#f4f4f4" stroke="#a0a0a0" stroke-width="1"/>
<path d="M2.6 10.4 A5.5 5.5 0 0 1 10.4 2.6" stroke="#555" stroke-width="1.2" fill="none"/>
<path d="M10.4 2.6 A5.5 5.5 0 0 1 2.6 10.4" stroke="#fff" stroke-width="1.2" fill="none"/></svg>
<div class="t dv" style="left:1841px;top:183px;font-size:12.5px;color:#a8a8a8">Sensor</div>
<div style="left:1822px;top:197px;width:66px;height:14px;background:#f0f0f0;"></div>
<svg style="position:absolute;left:1822px;top:197px;" width="13" height="13" viewBox="0 0 13 13"><circle cx="6.5" cy="6.5" r="5.5" fill="#fff" stroke="#a0a0a0" stroke-width="1"/>
<path d="M2.6 10.4 A5.5 5.5 0 0 1 10.4 2.6" stroke="#555" stroke-width="1.2" fill="none"/>
<path d="M10.4 2.6 A5.5 5.5 0 0 1 2.6 10.4" stroke="#fff" stroke-width="1.2" fill="none"/></svg>
<div class="t dv" style="left:1841px;top:199px;font-size:12.5px;color:#000">RGB</div>
<div style="left:1822px;top:213px;width:66px;height:14px;background:#f0f0f0;"></div>
<svg style="position:absolute;left:1822px;top:213px;" width="13" height="13" viewBox="0 0 13 13"><circle cx="6.5" cy="6.5" r="5.5" fill="#fff" stroke="#a0a0a0" stroke-width="1"/>
<path d="M2.6 10.4 A5.5 5.5 0 0 1 10.4 2.6" stroke="#555" stroke-width="1.2" fill="none"/>
<path d="M10.4 2.6 A5.5 5.5 0 0 1 2.6 10.4" stroke="#fff" stroke-width="1.2" fill="none"/></svg>
<div class="t dv" style="left:1841px;top:215px;font-size:12.5px;color:#000">XYZ</div>
<div style="left:1822px;top:229px;width:66px;height:14px;background:#f0f0f0;"></div>
<svg style="position:absolute;left:1822px;top:229px;" width="13" height="13" viewBox="0 0 13 13"><circle cx="6.5" cy="6.5" r="5.5" fill="#fff" stroke="#a0a0a0" stroke-width="1"/>
<path d="M2.6 10.4 A5.5 5.5 0 0 1 10.4 2.6" stroke="#555" stroke-width="1.2" fill="none"/>
<path d="M10.4 2.6 A5.5 5.5 0 0 1 2.6 10.4" stroke="#fff" stroke-width="1.2" fill="none"/></svg>
<div class="t dv" style="left:1841px;top:231px;font-size:12.5px;color:#000">xyz</div>
<div style="left:1822px;top:244px;width:66px;height:14px;background:#f0f0f0;"></div>
<svg style="position:absolute;left:1822px;top:244px;" width="13" height="13" viewBox="0 0 13 13"><circle cx="6.5" cy="6.5" r="5.5" fill="#fff" stroke="#a0a0a0" stroke-width="1"/>
<path d="M2.6 10.4 A5.5 5.5 0 0 1 10.4 2.6" stroke="#555" stroke-width="1.2" fill="none"/>
<path d="M10.4 2.6 A5.5 5.5 0 0 1 2.6 10.4" stroke="#fff" stroke-width="1.2" fill="none"/><circle cx="6.5" cy="6.5" r="2.1" fill="#000"/></svg>
<div class="t dv" style="left:1841px;top:246px;font-size:12.5px;color:#000">xyY</div>
<div style="left:1812px;top:261px;width:89px;height:123px;background:#8a8a8a;"></div>
<div style="left:1812px;top:264px;width:84px;height:30px;background:#ebebeb;border:1px solid #fff;border-right-color:#a0a0a0;border-bottom-color:#d4d4d4;"></div>
<div class="t dv" style="left:1863px;top:275px;font-size:12.5px;">Go</div>
<div style="left:1812px;top:294px;width:84px;height:30px;background:#ebebeb;border:1px solid #fff;border-right-color:#a0a0a0;border-bottom-color:#d4d4d4;"></div>
<div class="t dv" style="left:1851px;top:304px;font-size:12.5px;">Delete</div>
<div style="left:1812px;top:324px;width:84px;height:30px;background:#ebebeb;border:1px solid #fff;border-right-color:#a0a0a0;border-bottom-color:#d4d4d4;"></div>
<div class="t dv" style="left:1858px;top:334px;font-size:12.5px;">Refs</div>
<div style="left:1818px;top:358px;width:57px;height:18px;background:#ffffff;"></div>
<div style="left:1819px;top:360px;width:12px;height:12px;background:#ffffff;border:1px solid #dcdcdc;border-top-color:#6a6a6a;border-left-color:#6a6a6a;"></div>
<div style="left:1820px;top:361px;width:10px;height:1px;background:#a0a0a0;"></div>
<div style="left:1820px;top:361px;width:1px;height:10px;background:#a0a0a0;"></div>
<div class="t dv" style="left:1837px;top:360px;font-size:12.5px;">Edit</div>
<div style="left:5px;top:387px;width:378px;height:630px;background:#7c7c7c;"></div>
<div style="left:6px;top:388px;width:375px;height:627px;background:#ececec;"></div>
<div style="left:381px;top:388px;width:1px;height:628px;background:#909090;"></div>
<div style="left:382px;top:387px;width:1px;height:630px;background:#a8a8a8;"></div>
<div style="left:6px;top:1014px;width:376px;height:2px;background:#a4a4a4;"></div>
<div style="left:5px;top:1016px;width:378px;height:1px;background:#ffffff;"></div>
<div style="left:5px;top:387px;width:1px;height:629px;background:#808080;"></div>
<div style="left:6px;top:405px;width:1px;height:610px;background:#a8a8a8;"></div>
<div style="left:6px;top:388px;width:375px;height:17px;background:#707070;"></div>
<div style="left:6px;top:388px;width:375px;height:17px;background:linear-gradient(90deg,#e3eaf5,#eaf0f9 60%,#eef3fa);border-radius:5px 5px 0 0;"></div>
<div style="left:6px;top:405px;width:375px;height:1px;background:#9c9c9c;"></div>
<div class="t dv b" style="left:12px;top:392px;font-size:11px;letter-spacing:0.4px;color:#484848">Selected color</div>
<div style="left:384px;top:384px;width:2px;height:633px;background:#707070;"></div>
<div style="left:386px;top:384px;width:2px;height:633px;background:#b4b4b4;"></div>
<div style="left:18px;top:409px;width:110px;height:15px;background:#f0f0f0;"></div>
<div class="t dv" style="left:18px;top:411px;font-size:12.5px;">RGB Levels</div>
<div style="left:14px;top:433px;width:201px;height:86px;background:#f0f0f0;"></div>
<div style="left:14px;top:477px;width:201px;height:1px;background:repeating-linear-gradient(90deg,#808080 0 3px,transparent 3px 6px);"></div>
<div class="t sf b" style="left:8.700000000000003px;top:497px;width:60px;text-align:center;font-size:11px;">0.0%</div>
<div class="t sf b" style="left:60px;top:497px;width:60px;text-align:center;font-size:11px;">0.0%</div>
<div class="t sf b" style="left:110.69999999999999px;top:497px;width:60px;text-align:center;font-size:11px;">0.0%</div>
<div class="t sf b" style="left:162.2px;top:497px;width:60px;text-align:center;font-size:11px;">dE 0.0</div>
<svg style="position:absolute;left:14px;top:504px;" width="200" height="15" viewBox="0 0 200 15"><ellipse cx="25.5" cy="17.6" rx="31" ry="13" fill="#9c0000" stroke="#000" stroke-width="1.1"/><ellipse cx="76.5" cy="17.6" rx="31" ry="13" fill="#00a000" stroke="#000" stroke-width="1.1"/><ellipse cx="127.5" cy="17.6" rx="31" ry="13" fill="#0000a0" stroke="#000" stroke-width="1.1"/><ellipse cx="178.5" cy="17.6" rx="31" ry="13" fill="#b8860b" stroke="#000" stroke-width="1.1"/><rect x="0" y="10" width="200" height="5" fill="#000"/></svg>
<div style="left:16px;top:533px;width:193px;height:74px;background:#f0f0f0;"></div>
<div class="t ui b" style="left:35px;top:535px;font-size:13px;letter-spacing:0.35px">Measure</div>
<div class="t ui b" style="left:127px;top:535px;font-size:13px;letter-spacing:0.35px">Reference</div>
<div style="left:18px;top:622px;width:42px;height:15px;background:#f0f0f0;"></div>
<div class="t dv" style="left:18px;top:624px;font-size:12.5px;">Target</div>
<div style="left:50px;top:638px;width:116px;height:89px;background:#000;"></div>
<div style="left:51px;top:639px;width:114px;height:88px;background:conic-gradient(from 0deg at 50% 50%,#40ff00 0deg,#a0e800 30deg,#ffc800 52deg,#ff6000 70deg,#ff0000 95deg,#ff0090 128deg,#c000b0 150deg,#8000c8 180deg,#3000f0 215deg,#0000ff 232deg,#0060d0 255deg,#00a0a8 280deg,#00ff80 308deg,#20ff30 335deg,#40ff00 360deg);"></div>
<svg style="position:absolute;left:50px;top:638px" width="116" height="89" viewBox="0 0 116 89">
<rect x="17.5" y="13.5" width="81" height="62" rx="8" ry="8" fill="#000" stroke="#fff" stroke-width="1"/>
<path d="M58.5 13V76 M15 44.5H101" stroke="#fff" stroke-width="1" stroke-dasharray="4 2" fill="none"/>
<ellipse cx="58.5" cy="44.5" rx="20.6" ry="15.5" stroke="#fff" stroke-width="1" stroke-dasharray="3 3.4" fill="none"/>
<rect x="35.5" y="43.5" width="2" height="2" fill="#fff" transform="rotate(45 36.5 44.5)"/>
</svg>
<div style="left:230px;top:407px;width:128px;height:15px;background:#f0f0f0;"></div>
<div class="t dv" style="left:241px;top:409px;font-size:12.5px;">Current Measure</div>
<div style="left:220px;top:430px;width:153px;height:577px;background:#f0f0f0;border-top:2px solid #696969;border-left:2px solid #696969;border-right:1px solid #fff;border-bottom:1px solid #fff;"></div>
<div style="left:220px;top:430px;width:153px;height:1px;background:#a0a0a0;"></div>
<div style="left:220px;top:430px;width:1px;height:577px;background:#a0a0a0;"></div>
<div style="left:222px;top:432px;width:52px;height:22px;background:#f0f0f0;"></div>
<div style="left:222px;top:432px;width:52px;height:1px;background:#ffffff;"></div>
<div style="left:222px;top:454px;width:52px;height:1px;background:#5e5e5e;"></div>
<div style="left:275px;top:432px;width:79px;height:22px;background:#ffffff;"></div>
<div style="left:275px;top:454px;width:79px;height:1px;background:#c0c0c0;"></div>
<div class="t ui b" style="left:222px;top:438px;width:52px;text-align:center;font-size:12px;letter-spacing:-0.1px">Y cd/m<sup style="font-size:8px;line-height:0;position:relative;top:-1px">2</sup></div>
<div style="left:222px;top:455px;width:52px;height:22px;background:#f0f0f0;"></div>
<div style="left:222px;top:455px;width:52px;height:1px;background:#ffffff;"></div>
<div style="left:222px;top:477px;width:52px;height:1px;background:#5e5e5e;"></div>
<div style="left:275px;top:455px;width:79px;height:22px;background:#ffffff;"></div>
<div style="left:275px;top:477px;width:79px;height:1px;background:#c0c0c0;"></div>
<div class="t ui b" style="left:222px;top:461px;width:52px;text-align:center;font-size:12px;letter-spacing:-0.1px">Y ftL</div>
<div style="left:222px;top:478px;width:52px;height:22px;background:#f0f0f0;"></div>
<div style="left:222px;top:478px;width:52px;height:1px;background:#ffffff;"></div>
<div style="left:222px;top:500px;width:52px;height:1px;background:#5e5e5e;"></div>
<div style="left:275px;top:478px;width:79px;height:22px;background:#ffffff;"></div>
<div style="left:275px;top:500px;width:79px;height:1px;background:#c0c0c0;"></div>
<div class="t ui b" style="left:222px;top:484px;width:52px;text-align:center;font-size:12px;letter-spacing:-0.1px">T°</div>
<div style="left:222px;top:501px;width:52px;height:22px;background:#f0f0f0;"></div>
<div style="left:222px;top:501px;width:52px;height:1px;background:#ffffff;"></div>
<div style="left:222px;top:523px;width:52px;height:1px;background:#5e5e5e;"></div>
<div style="left:275px;top:501px;width:79px;height:22px;background:#e0e0e0;"></div>
<div style="left:275px;top:523px;width:79px;height:1px;background:#c0c0c0;"></div>
<div class="t ui b" style="left:222px;top:507px;width:52px;text-align:center;font-size:12px;letter-spacing:-0.1px">X</div>
<div style="left:222px;top:524px;width:52px;height:22px;background:#f0f0f0;"></div>
<div style="left:222px;top:524px;width:52px;height:1px;background:#ffffff;"></div>
<div style="left:222px;top:546px;width:52px;height:1px;background:#5e5e5e;"></div>
<div style="left:275px;top:524px;width:79px;height:22px;background:#e0e0e0;"></div>
<div style="left:275px;top:546px;width:79px;height:1px;background:#c0c0c0;"></div>
<div class="t ui b" style="left:222px;top:530px;width:52px;text-align:center;font-size:12px;letter-spacing:-0.1px">Y</div>
<div style="left:222px;top:547px;width:52px;height:22px;background:#f0f0f0;"></div>
<div style="left:222px;top:547px;width:52px;height:1px;background:#ffffff;"></div>
<div style="left:222px;top:569px;width:52px;height:1px;background:#5e5e5e;"></div>
<div style="left:275px;top:547px;width:79px;height:22px;background:#e0e0e0;"></div>
<div style="left:275px;top:569px;width:79px;height:1px;background:#c0c0c0;"></div>
<div class="t ui b" style="left:222px;top:553px;width:52px;text-align:center;font-size:12px;letter-spacing:-0.1px">Z</div>
<div style="left:222px;top:570px;width:52px;height:22px;background:#f0f0f0;"></div>
<div style="left:222px;top:570px;width:52px;height:1px;background:#ffffff;"></div>
<div style="left:222px;top:592px;width:52px;height:1px;background:#5e5e5e;"></div>
<div style="left:275px;top:570px;width:79px;height:22px;background:#ffffff;"></div>
<div style="left:275px;top:592px;width:79px;height:1px;background:#c0c0c0;"></div>
<div class="t ui b" style="left:222px;top:576px;width:52px;text-align:center;font-size:12px;letter-spacing:-0.1px">R</div>
<div style="left:222px;top:593px;width:52px;height:22px;background:#f0f0f0;"></div>
<div style="left:222px;top:593px;width:52px;height:1px;background:#ffffff;"></div>
<div style="left:222px;top:615px;width:52px;height:1px;background:#5e5e5e;"></div>
<div style="left:275px;top:593px;width:79px;height:22px;background:#ffffff;"></div>
<div style="left:275px;top:615px;width:79px;height:1px;background:#c0c0c0;"></div>
<div class="t ui b" style="left:222px;top:599px;width:52px;text-align:center;font-size:12px;letter-spacing:-0.1px">G</div>
<div style="left:222px;top:616px;width:52px;height:22px;background:#f0f0f0;"></div>
<div style="left:222px;top:616px;width:52px;height:1px;background:#ffffff;"></div>
<div style="left:222px;top:638px;width:52px;height:1px;background:#5e5e5e;"></div>
<div style="left:275px;top:616px;width:79px;height:22px;background:#ffffff;"></div>
<div style="left:275px;top:638px;width:79px;height:1px;background:#c0c0c0;"></div>
<div class="t ui b" style="left:222px;top:622px;width:52px;text-align:center;font-size:12px;letter-spacing:-0.1px">B</div>
<div style="left:222px;top:639px;width:52px;height:22px;background:#f0f0f0;"></div>
<div style="left:222px;top:639px;width:52px;height:1px;background:#ffffff;"></div>
<div style="left:222px;top:661px;width:52px;height:1px;background:#5e5e5e;"></div>
<div style="left:275px;top:639px;width:79px;height:22px;background:#e0e0e0;"></div>
<div style="left:275px;top:661px;width:79px;height:1px;background:#c0c0c0;"></div>
<div class="t ui b" style="left:222px;top:645px;width:52px;text-align:center;font-size:12px;letter-spacing:-0.1px">x</div>
<div style="left:222px;top:662px;width:52px;height:22px;background:#f0f0f0;"></div>
<div style="left:222px;top:662px;width:52px;height:1px;background:#ffffff;"></div>
<div style="left:222px;top:684px;width:52px;height:1px;background:#5e5e5e;"></div>
<div style="left:275px;top:662px;width:79px;height:22px;background:#e0e0e0;"></div>
<div style="left:275px;top:684px;width:79px;height:1px;background:#c0c0c0;"></div>
<div class="t ui b" style="left:222px;top:668px;width:52px;text-align:center;font-size:12px;letter-spacing:-0.1px">y</div>
<div style="left:222px;top:685px;width:52px;height:22px;background:#f0f0f0;"></div>
<div style="left:222px;top:685px;width:52px;height:1px;background:#ffffff;"></div>
<div style="left:222px;top:707px;width:52px;height:1px;background:#5e5e5e;"></div>
<div style="left:275px;top:685px;width:79px;height:22px;background:#e0e0e0;"></div>
<div style="left:275px;top:707px;width:79px;height:1px;background:#c0c0c0;"></div>
<div class="t ui b" style="left:222px;top:691px;width:52px;text-align:center;font-size:12px;letter-spacing:-0.1px">Y</div>
<div style="left:222px;top:708px;width:52px;height:22px;background:#f0f0f0;"></div>
<div style="left:222px;top:708px;width:52px;height:1px;background:#ffffff;"></div>
<div style="left:222px;top:730px;width:52px;height:1px;background:#5e5e5e;"></div>
<div style="left:275px;top:708px;width:79px;height:22px;background:#ffffff;"></div>
<div style="left:275px;top:730px;width:79px;height:1px;background:#c0c0c0;"></div>
<div class="t ui b" style="left:222px;top:714px;width:52px;text-align:center;font-size:12px;letter-spacing:-0.1px">x</div>
<div style="left:222px;top:731px;width:52px;height:22px;background:#f0f0f0;"></div>
<div style="left:222px;top:731px;width:52px;height:1px;background:#ffffff;"></div>
<div style="left:222px;top:753px;width:52px;height:1px;background:#5e5e5e;"></div>
<div style="left:275px;top:731px;width:79px;height:22px;background:#ffffff;"></div>
<div style="left:275px;top:753px;width:79px;height:1px;background:#c0c0c0;"></div>
<div class="t ui b" style="left:222px;top:737px;width:52px;text-align:center;font-size:12px;letter-spacing:-0.1px">y</div>
<div style="left:222px;top:754px;width:52px;height:22px;background:#f0f0f0;"></div>
<div style="left:222px;top:754px;width:52px;height:1px;background:#ffffff;"></div>
<div style="left:222px;top:776px;width:52px;height:1px;background:#5e5e5e;"></div>
<div style="left:275px;top:754px;width:79px;height:22px;background:#ffffff;"></div>
<div style="left:275px;top:776px;width:79px;height:1px;background:#c0c0c0;"></div>
<div class="t ui b" style="left:222px;top:760px;width:52px;text-align:center;font-size:12px;letter-spacing:-0.1px">z</div>
<div style="left:222px;top:777px;width:52px;height:22px;background:#f0f0f0;"></div>
<div style="left:222px;top:777px;width:52px;height:1px;background:#ffffff;"></div>
<div style="left:222px;top:799px;width:52px;height:1px;background:#5e5e5e;"></div>
<div style="left:275px;top:777px;width:79px;height:22px;background:#e0e0e0;"></div>
<div style="left:275px;top:799px;width:79px;height:1px;background:#c0c0c0;"></div>
<div class="t ui b" style="left:222px;top:783px;width:52px;text-align:center;font-size:12px;letter-spacing:-0.1px">L</div>
<div style="left:222px;top:800px;width:52px;height:22px;background:#f0f0f0;"></div>
<div style="left:222px;top:800px;width:52px;height:1px;background:#ffffff;"></div>
<div style="left:222px;top:822px;width:52px;height:1px;background:#5e5e5e;"></div>
<div style="left:275px;top:800px;width:79px;height:22px;background:#e0e0e0;"></div>
<div style="left:275px;top:822px;width:79px;height:1px;background:#c0c0c0;"></div>
<div class="t ui b" style="left:222px;top:806px;width:52px;text-align:center;font-size:12px;letter-spacing:-0.1px">a</div>
<div style="left:222px;top:823px;width:52px;height:22px;background:#f0f0f0;"></div>
<div style="left:222px;top:823px;width:52px;height:1px;background:#ffffff;"></div>
<div style="left:222px;top:845px;width:52px;height:1px;background:#5e5e5e;"></div>
<div style="left:275px;top:823px;width:79px;height:22px;background:#e0e0e0;"></div>
<div style="left:275px;top:845px;width:79px;height:1px;background:#c0c0c0;"></div>
<div class="t ui b" style="left:222px;top:829px;width:52px;text-align:center;font-size:12px;letter-spacing:-0.1px">b</div>
<div style="left:222px;top:846px;width:52px;height:22px;background:#f0f0f0;"></div>
<div style="left:222px;top:846px;width:52px;height:1px;background:#ffffff;"></div>
<div style="left:222px;top:868px;width:52px;height:1px;background:#5e5e5e;"></div>
<div style="left:275px;top:846px;width:79px;height:22px;background:#ffffff;"></div>
<div style="left:275px;top:868px;width:79px;height:1px;background:#c0c0c0;"></div>
<div class="t ui b" style="left:222px;top:852px;width:52px;text-align:center;font-size:12px;letter-spacing:-0.1px">L</div>
<div style="left:222px;top:869px;width:52px;height:22px;background:#f0f0f0;"></div>
<div style="left:222px;top:869px;width:52px;height:1px;background:#ffffff;"></div>
<div style="left:222px;top:891px;width:52px;height:1px;background:#5e5e5e;"></div>
<div style="left:275px;top:869px;width:79px;height:22px;background:#ffffff;"></div>
<div style="left:275px;top:891px;width:79px;height:1px;background:#c0c0c0;"></div>
<div class="t ui b" style="left:222px;top:875px;width:52px;text-align:center;font-size:12px;letter-spacing:-0.1px">C</div>
<div style="left:222px;top:892px;width:52px;height:22px;background:#f0f0f0;"></div>
<div style="left:222px;top:892px;width:52px;height:1px;background:#ffffff;"></div>
<div style="left:222px;top:914px;width:52px;height:1px;background:#5e5e5e;"></div>
<div style="left:275px;top:892px;width:79px;height:22px;background:#ffffff;"></div>
<div style="left:275px;top:914px;width:79px;height:1px;background:#c0c0c0;"></div>
<div class="t ui b" style="left:222px;top:898px;width:52px;text-align:center;font-size:12px;letter-spacing:-0.1px">H</div>
<div style="left:222px;top:915px;width:52px;height:22px;background:#f0f0f0;"></div>
<div style="left:222px;top:915px;width:52px;height:1px;background:#ffffff;"></div>
<div style="left:222px;top:937px;width:52px;height:1px;background:#5e5e5e;"></div>
<div style="left:275px;top:915px;width:79px;height:22px;background:#e0e0e0;"></div>
<div style="left:275px;top:937px;width:79px;height:1px;background:#c0c0c0;"></div>
<div class="t ui b" style="left:222px;top:921px;width:52px;text-align:center;font-size:12px;letter-spacing:-0.1px">L</div>
<div style="left:222px;top:938px;width:52px;height:22px;background:#f0f0f0;"></div>
<div style="left:222px;top:938px;width:52px;height:1px;background:#ffffff;"></div>
<div style="left:222px;top:960px;width:52px;height:1px;background:#5e5e5e;"></div>
<div style="left:275px;top:938px;width:79px;height:22px;background:#e0e0e0;"></div>
<div style="left:275px;top:960px;width:79px;height:1px;background:#c0c0c0;"></div>
<div class="t ui b" style="left:222px;top:944px;width:52px;text-align:center;font-size:12px;letter-spacing:-0.1px">M</div>
<div style="left:222px;top:961px;width:52px;height:22px;background:#f0f0f0;"></div>
<div style="left:222px;top:961px;width:52px;height:1px;background:#ffffff;"></div>
<div style="left:222px;top:983px;width:52px;height:1px;background:#5e5e5e;"></div>
<div style="left:275px;top:961px;width:79px;height:22px;background:#e0e0e0;"></div>
<div style="left:275px;top:983px;width:79px;height:1px;background:#c0c0c0;"></div>
<div class="t ui b" style="left:222px;top:967px;width:52px;text-align:center;font-size:12px;letter-spacing:-0.1px">S</div>
<div style="left:274px;top:432px;width:1px;height:552px;background:#5e5e5e;"></div>
<div style="left:354px;top:432px;width:1px;height:552px;background:#c0c0c0;"></div>
<div style="left:222px;top:984px;width:133px;height:22px;background:#a0a0a0;"></div>
<div style="left:355px;top:432px;width:17px;height:574px;background:#f0f0f0;"></div>
<svg style="position:absolute;left:359px;top:437px;" width="10" height="8" viewBox="0 0 10 8"><path d="M0.5 7.5 L5 1 L9.5 7.5 Z" fill="#a6a6a6"/></svg>
<svg style="position:absolute;left:359px;top:995px;" width="10" height="8" viewBox="0 0 10 8"><path d="M0.5 0.5 L5 7 L9.5 0.5 Z" fill="#a6a6a6"/></svg>
<div style="left:391px;top:387px;width:1504px;height:630px;background:#7c7c7c;"></div>
<div style="left:392px;top:388px;width:1501px;height:627px;background:#ececec;"></div>
<div style="left:1893px;top:388px;width:1px;height:628px;background:#909090;"></div>
<div style="left:1894px;top:387px;width:1px;height:630px;background:#a8a8a8;"></div>
<div style="left:392px;top:1014px;width:1502px;height:2px;background:#a4a4a4;"></div>
<div style="left:391px;top:1016px;width:1504px;height:1px;background:#ffffff;"></div>
<div style="left:391px;top:387px;width:1px;height:629px;background:#808080;"></div>
<div style="left:392px;top:405px;width:1px;height:610px;background:#a8a8a8;"></div>
<div style="left:392px;top:388px;width:1501px;height:17px;background:#707070;"></div>
<div style="left:392px;top:388px;width:1501px;height:17px;background:linear-gradient(90deg,#e3eaf5,#eaf0f9 60%,#eef3fa);border-radius:5px 5px 0 0;"></div>
<div style="left:392px;top:405px;width:1501px;height:1px;background:#9c9c9c;"></div>
<div class="t dv b" style="left:398px;top:392px;font-size:11px;letter-spacing:0.4px;color:#484848">Information</div>
<div style="left:1895px;top:384px;width:1px;height:633px;background:#f4f4f4;"></div>
<div style="left:1896px;top:384px;width:2px;height:635px;background:#707070;"></div>
<div style="left:1898px;top:384px;width:3px;height:638px;background:#a8a8a8;"></div>
<div style="left:396px;top:410px;width:302px;height:21px;background:#ffffff;border:1px solid #e6e6e6;border-top:1px solid #6a6a6a;border-left:1px solid #6a6a6a;"></div>
<div style="left:397px;top:411px;width:300px;height:1px;background:#a0a0a0;"></div>
<div style="left:397px;top:411px;width:1px;height:19px;background:#a0a0a0;"></div>
<div class="t dv" style="left:400px;top:416px;font-size:12.5px;">NearBlack - NearWhite</div>
<div style="left:680px;top:413px;width:17px;height:17px;background:#f0f0f0;border:1px solid #fff;border-right-color:#696969;border-bottom-color:#696969;"></div>
<div style="left:681px;top:428px;width:15px;height:1px;background:#a0a0a0;"></div>
<div style="left:695px;top:414px;width:1px;height:15px;background:#a0a0a0;"></div>
<svg style="position:absolute;left:684px;top:419px;" width="9" height="5" viewBox="0 0 8 5"><path d="M0.5 0.5h7l-3.5 3.5z" fill="#000"/></svg>
<div style="left:398px;top:439px;width:1495px;height:570px;background:#ffffff;"></div>
<div style="left:398px;top:1007px;width:1495px;height:2px;background:#f6f6f6;"></div>
<div style="left:398px;top:439px;width:744px;height:566px;background:#8c8c8c;"></div>
<div style="left:398px;top:440px;width:744px;height:1px;background:#707070;"></div>
<div style="left:399px;top:440px;width:1px;height:565px;background:#707070;"></div>
<div style="left:398px;top:439px;width:1px;height:566px;background:#868686;"></div>
<div style="left:400px;top:441px;width:742px;height:564px;background:#a2a2a2;"></div>
<svg style="position:absolute;left:402px;top:443px;" width="740" height="562" viewBox="0 0 740 562"><defs><linearGradient id="lbg" x1="0" y1="0" x2="1" y2="0"><stop offset="0" stop-color="#1e1e1e"/><stop offset="1" stop-color="#0a0a0a"/></linearGradient><linearGradient id="rbg" x1="0" y1="0" x2="1" y2="0"><stop offset="0" stop-color="#7e7e7e"/><stop offset="1" stop-color="#ffffff"/></linearGradient></defs><rect x="0" y="0" width="740" height="562" fill="url(#lbg)"/><rect x="0" y="0" width="1" height="562" fill="#0a4444"/><rect x="185" y="0" width="1" height="562" fill="#0a4444"/><rect x="370" y="0" width="1" height="562" fill="#0a4444"/><rect x="555" y="0" width="1" height="562" fill="#0a4444"/><rect x="0" y="505" width="740" height="1" fill="#0a4444"/><text x="2" y="501" font-family="Liberation Serif, serif" font-size="14" fill="#c4c4c4">0.1 cd m-2</text><rect x="0" y="449" width="740" height="1" fill="#0a4444"/><text x="2" y="445" font-family="Liberation Serif, serif" font-size="14" fill="#c4c4c4">0.2 cd m-2</text><rect x="0" y="393" width="740" height="1" fill="#0a4444"/><text x="2" y="389" font-family="Liberation Serif, serif" font-size="14" fill="#c4c4c4">0.3 cd m-2</text><rect x="0" y="337" width="740" height="1" fill="#0a4444"/><text x="2" y="333" font-family="Liberation Serif, serif" font-size="14" fill="#c4c4c4">0.4 cd m-2</text><rect x="0" y="281" width="740" height="1" fill="#0a4444"/><text x="2" y="277" font-family="Liberation Serif, serif" font-size="14" fill="#c4c4c4">0.5 cd m-2</text><rect x="0" y="224" width="740" height="1" fill="#0a4444"/><text x="2" y="220" font-family="Liberation Serif, serif" font-size="14" fill="#c4c4c4">0.6 cd m-2</text><rect x="0" y="168" width="740" height="1" fill="#0a4444"/><text x="2" y="164" font-family="Liberation Serif, serif" font-size="14" fill="#c4c4c4">0.7 cd m-2</text><rect x="0" y="112" width="740" height="1" fill="#0a4444"/><text x="2" y="108" font-family="Liberation Serif, serif" font-size="14" fill="#c4c4c4">0.8 cd m-2</text><rect x="0" y="56" width="740" height="1" fill="#0a4444"/><text x="2" y="52" font-family="Liberation Serif, serif" font-size="14" fill="#c4c4c4">0.9 cd m-2</text><text x="188" y="558" font-family="Liberation Serif, serif" font-size="14" fill="#dcdcdc">1% White</text><text x="373" y="558" font-family="Liberation Serif, serif" font-size="14" fill="#dcdcdc">2% White</text><text x="558" y="558" font-family="Liberation Serif, serif" font-size="14" fill="#dcdcdc">3% White</text><text x="384.5" y="14" text-anchor="middle" font-family="Liberation Sans, sans-serif" font-weight="bold" font-size="14.75" fill="#dede00">Near Black Luminance Response</text><text x="730" y="520" text-anchor="end" font-family="Liberation Sans, sans-serif" font-weight="bold" font-size="16" fill="#6a6a6a">hcfr.sourceforge.net</text><polyline points="0.5,558.5 168.5,544.5 337.5,537.5 506.5,528.5 675.0,513.5" fill="none" stroke="#ffff00" stroke-width="2" shape-rendering="crispEdges"/><polyline points="0.5,558.5 168.5,557.5 337.5,550.5 506.5,538.5 675.0,519.0" fill="none" stroke="#fff" stroke-width="1" stroke-dasharray="3 3" shape-rendering="crispEdges"/><rect x="164" y="553" width="8" height="8" fill="#e4e4e4"/><rect x="333" y="546" width="8" height="8" fill="#e4e4e4"/><rect x="502" y="534" width="8" height="8" fill="#e4e4e4"/><rect x="670.5" y="514.5" width="8" height="8" fill="#e4e4e4"/><rect x="164" y="540" width="8" height="8" fill="#ffff00"/><rect x="333" y="533" width="8" height="8" fill="#ffff00"/><rect x="502" y="524" width="8" height="8" fill="#ffff00"/><rect x="670.5" y="509" width="8" height="8" fill="#ffff00"/><rect x="0" y="554" width="4" height="8" fill="#e4e4e4"/></svg>
<div style="left:1146px;top:439px;width:744px;height:566px;background:#8c8c8c;"></div>
<div style="left:1146px;top:440px;width:744px;height:1px;background:#707070;"></div>
<div style="left:1147px;top:440px;width:1px;height:565px;background:#707070;"></div>
<div style="left:1146px;top:439px;width:1px;height:566px;background:#868686;"></div>
<div style="left:1148px;top:441px;width:742px;height:564px;background:#a2a2a2;"></div>
<svg style="position:absolute;left:1150px;top:443px;" width="740" height="562" viewBox="0 0 740 562"><rect x="0" y="0" width="740" height="562" fill="url(#rbg)"/><rect x="0" y="0" width="1" height="562" fill="#0a4c4c"/><rect x="123" y="0" width="1" height="562" fill="#0a4c4c"/><rect x="246" y="0" width="1" height="562" fill="#0a4c4c"/><rect x="370" y="0" width="1" height="562" fill="#0a4c4c"/><rect x="493" y="0" width="1" height="562" fill="#0a4c4c"/><rect x="616" y="0" width="1" height="562" fill="#0a4c4c"/><rect x="0" y="24" width="740" height="1" fill="#0a4c4c"/><text x="2" y="20" font-family="Liberation Serif, serif" font-size="14" fill="#c8c8c8">200 cd m-2</text><rect x="0" y="73" width="740" height="1" fill="#0a4c4c"/><text x="2" y="69" font-family="Liberation Serif, serif" font-size="14" fill="#c8c8c8">198 cd m-2</text><rect x="0" y="122" width="740" height="1" fill="#0a4c4c"/><text x="2" y="118" font-family="Liberation Serif, serif" font-size="14" fill="#c8c8c8">196 cd m-2</text><rect x="0" y="171" width="740" height="1" fill="#0a4c4c"/><text x="2" y="167" font-family="Liberation Serif, serif" font-size="14" fill="#c8c8c8">194 cd m-2</text><rect x="0" y="219" width="740" height="1" fill="#0a4c4c"/><text x="2" y="215" font-family="Liberation Serif, serif" font-size="14" fill="#c8c8c8">192 cd m-2</text><rect x="0" y="268" width="740" height="1" fill="#0a4c4c"/><text x="2" y="264" font-family="Liberation Serif, serif" font-size="14" fill="#c8c8c8">190 cd m-2</text><rect x="0" y="317" width="740" height="1" fill="#0a4c4c"/><text x="2" y="313" font-family="Liberation Serif, serif" font-size="14" fill="#c8c8c8">188 cd m-2</text><rect x="0" y="366" width="740" height="1" fill="#0a4c4c"/><text x="2" y="362" font-family="Liberation Serif, serif" font-size="14" fill="#c8c8c8">186 cd m-2</text><rect x="0" y="415" width="740" height="1" fill="#0a4c4c"/><text x="2" y="411" font-family="Liberation Serif, serif" font-size="14" fill="#c8c8c8">184 cd m-2</text><rect x="0" y="464" width="740" height="1" fill="#0a4c4c"/><text x="2" y="460" font-family="Liberation Serif, serif" font-size="14" fill="#c8c8c8">182 cd m-2</text><rect x="0" y="513" width="740" height="1" fill="#0a4c4c"/><text x="2" y="509" font-family="Liberation Serif, serif" font-size="14" fill="#c8c8c8">180 cd m-2</text><text x="125" y="558" font-family="Liberation Serif, serif" font-size="14" fill="#1c1c1c">95% White</text><text x="248" y="558" font-family="Liberation Serif, serif" font-size="14" fill="#1c1c1c">96% White</text><text x="372" y="558" font-family="Liberation Serif, serif" font-size="14" fill="#1c1c1c">97% White</text><text x="495" y="558" font-family="Liberation Serif, serif" font-size="14" fill="#1c1c1c">98% White</text><text x="618" y="558" font-family="Liberation Serif, serif" font-size="14" fill="#1c1c1c">99% White</text><text x="385" y="14" text-anchor="middle" font-family="Liberation Sans, sans-serif" font-weight="bold" font-size="14.75" fill="#6a2a6a">Near White Luminance Response</text><text x="731" y="520" text-anchor="end" font-family="Liberation Sans, sans-serif" font-weight="bold" font-size="16" fill="#8c8c8c" fill-opacity="0.85">hcfr.sourceforge.net</text><polyline points="233.5,432.5 345.5,316.5 458.5,234.5 571.5,108.5 740.5,16.5" fill="none" stroke="#ffff00" stroke-width="2" shape-rendering="crispEdges"/><polyline points="233.5,535.5 345.5,383.5 458.5,280.5 571.5,175.5 740.5,16.5" fill="none" stroke="#ffffff" stroke-opacity="0.75" stroke-width="1" stroke-dasharray="3 4" shape-rendering="crispEdges"/><rect x="229" y="428" width="8" height="8" fill="#ffff00"/><rect x="341" y="312" width="8" height="8" fill="#ffff00"/><rect x="454" y="230" width="8" height="8" fill="#ffff00"/><rect x="567" y="104" width="8" height="8" fill="#ffff00"/><rect x="229" y="531" width="8" height="8" fill="#e4e4e4"/><rect x="341" y="379" width="8" height="8" fill="#e4e4e4"/><rect x="454" y="276" width="8" height="8" fill="#e4e4e4"/><rect x="567" y="171" width="8" height="8" fill="#e4e4e4"/><rect x="736" y="12" width="8" height="8" fill="#e4e4e4"/></svg>
<div style="left:2px;top:1017px;width:1896px;height:2px;background:#707070;"></div>
<div style="left:0px;top:1019px;width:1901px;height:3px;background:#bcbcbc;"></div>
<div style="left:0px;top:1022px;width:1920px;height:1px;background:#ffffff;"></div>
<div style="left:0px;top:1023px;width:1920px;height:18px;background:#f0f0f0;"></div>
<div style="left:1901px;top:92px;width:19px;height:949px;background:#f0f0f0;"></div>
<div style="left:1901px;top:92px;width:1px;height:931px;background:#ffffff;"></div>
<div style="left:1918px;top:92px;width:1px;height:949px;background:#e2e2e2;"></div>
<div style="left:1909px;top:109px;width:2px;height:869px;background:#808080;"></div>
<div style="left:19px;top:1030px;width:1825px;height:2px;background:#808080;"></div>
<div style="left:0px;top:91px;width:1px;height:948px;background:#a0a0a0;"></div>
<div style="left:1px;top:91px;width:1px;height:948px;background:#707070;"></div>
<div style="left:0px;top:1040px;width:1920px;height:2px;background:#ffffff;"></div>
<div style="left:0px;top:1043px;width:1920px;height:18px;background:#f0f0f0;"></div>
<div style="left:0px;top:1042px;width:1920px;height:1px;background:#000;"></div>
<div style="left:0px;top:1042px;width:55px;height:19px;background:#000;"></div>
<div style="left:1px;top:1043px;width:17px;height:17px;background:#f0f0f0;border:1px solid #fff;border-right-color:#808080;border-bottom-color:#808080;"></div>
<div style="left:18px;top:1043px;width:17px;height:17px;background:#f0f0f0;border:1px solid #fff;border-right-color:#808080;border-bottom-color:#808080;"></div>
<div style="left:35px;top:1043px;width:18px;height:17px;background:#f0f0f0;border:1px solid #fff;border-right-color:#808080;border-bottom-color:#808080;"></div>
<svg style="position:absolute;left:1px;top:1043px;" width="53" height="17" viewBox="0 0 53 17"><path d="M5.5 4.5l7 7M12.5 4.5l-7 7" stroke="#000" stroke-width="1.3" fill="none"/>
<path d="M27.6 4 L22.8 8 L27.6 12 Z" fill="#000"/><path d="M40.4 4 L45.2 8 L40.4 12 Z" fill="#000"/></svg>
<svg style="position:absolute;left:50px;top:1042px;" width="290" height="19" viewBox="0 0 290 19"><path d="M69 0.5 L77 18.5 H137.2 L146 0.5" fill="#f0f0f0" stroke="#000" stroke-width="1.2"/>
<path d="M136.7 0.5 L145 18.5 H189.3 L197.5 0.5" fill="#f0f0f0" stroke="#000" stroke-width="1"/>
<path d="M188.2 0.5 L197 18.5 H263.2 L271.6 0.5" fill="#f0f0f0" stroke="#000" stroke-width="1"/>
<path d="M4 -1 L5 0.5 L12.5 18.5 H70 L78 0.5 L79 -1 Z" fill="#ffffff" stroke="none"/>
<path d="M5 0.5 L12.5 18.5 M70 18.5 L78 0.5" fill="none" stroke="#000" stroke-width="1"/>
<path d="M12.5 18.5 H70 M77 18.5 H137.2 M145 18.5 H189.3 M197 18.5 H263.2" stroke="#8a8a8a" stroke-width="1"/></svg>
<div style="left:128px;top:1042px;width:1792px;height:1px;background:#000;"></div>
<div class="t ui b" style="left:66.7px;top:1046.6px;font-size:10.7px;letter-spacing:0.02px">Measures</div>
<div class="t ui" style="left:134px;top:1048px;font-size:9.3px;letter-spacing:-0.06px;color:#111">Luminance</div>
<div class="t ui" style="left:200.2px;top:1048px;font-size:9.3px;letter-spacing:-0.06px;color:#111">Gamma</div>
<div class="t ui" style="left:255.4px;top:1048px;font-size:9.3px;letter-spacing:0px;color:#111">RGB Levels</div>
<svg style="position:absolute;left:1750px;top:1043px;" width="16" height="16" viewBox="0 0 16 16"><path d="M2 1h12v9l-2 4h-8l-2-4z" fill="#6b6b00" stroke="#3a3a00" stroke-width="1"/>
<rect x="4" y="3" width="6" height="5" fill="#d02020"/><path d="M5 5h4M7 4v3" stroke="#fff" stroke-width="1"/>
<circle cx="5.5" cy="12" r="2" fill="#f0f000"/><circle cx="10.5" cy="12" r="2" fill="#f0f000"/></svg>
<div style="left:1846px;top:1044px;width:13px;height:13px;background:#ffffff;border:1px solid #dcdcdc;border-top-color:#6a6a6a;border-left-color:#6a6a6a;"></div>
<div style="left:1847px;top:1045px;width:11px;height:1px;background:#a0a0a0;"></div>
<div style="left:1847px;top:1045px;width:1px;height:11px;background:#a0a0a0;"></div>
<div class="t ui" style="left:1864.5px;top:1045px;font-size:11px;letter-spacing:-0.15px">Reference</div>
<div style="left:0px;top:1061px;width:1920px;height:17px;background:linear-gradient(90deg,#e3eaf5 0px,#e8eef8 500px,#eef3fb 1400px);"></div>
<div class="t ui" style="left:2.6px;top:1066px;font-size:12px;letter-spacing:-0.65px">Ready</div>
<div style="left:1742px;top:1062px;width:76px;height:16px;border:1px solid #a9bcd8;border-right-color:#dfe8f5;border-bottom:none;"></div>
<div style="left:1820px;top:1062px;width:28px;height:16px;border:1px solid #a9bcd8;border-right-color:#dfe8f5;border-bottom:none;"></div>
<div style="left:1851px;top:1062px;width:33px;height:16px;border:1px solid #a9bcd8;border-right-color:#dfe8f5;border-bottom:none;"></div>
<div style="left:1887px;top:1062px;width:33px;height:16px;border:1px solid #a9bcd8;border-right-color:#dfe8f5;border-bottom:none;"></div>
<div class="t ui" style="left:1853px;top:1066px;font-size:12px;">NUM</div>
<div style="left:0px;top:1078px;width:1920px;height:2px;background:#111;"></div>
<svg width="0" height="0" style="position:absolute"><defs>
<linearGradient id="docg" x1="0" y1="0" x2="0.3" y2="1"><stop offset="0" stop-color="#ffffff"/><stop offset="0.4" stop-color="#e8eefe"/><stop offset="0.45" stop-color="#cfdcfa"/><stop offset="1" stop-color="#b4c8f4"/></linearGradient>
<linearGradient id="fold" x1="0" y1="0" x2="0.4" y2="1"><stop offset="0" stop-color="#fff6b0"/><stop offset="0.5" stop-color="#ffe060"/><stop offset="1" stop-color="#f4b800"/></linearGradient>
<linearGradient id="clipg" x1="0" y1="0" x2="1" y2="0"><stop offset="0" stop-color="#f4c020"/><stop offset="0.3" stop-color="#fff8a0"/><stop offset="1" stop-color="#e8b020"/></linearGradient>
<radialGradient id="helpg" cx="0.4" cy="0.3" r="0.8"><stop offset="0" stop-color="#6f97e8"/><stop offset="0.5" stop-color="#3468d6"/><stop offset="1" stop-color="#1c4cc0"/></radialGradient>
<linearGradient id="playg" x1="0" y1="0" x2="1" y2="1"><stop offset="0" stop-color="#38c850"/><stop offset="0.5" stop-color="#58d868"/><stop offset="1" stop-color="#20c030"/></linearGradient>
<linearGradient id="monb" x1="0" y1="0" x2="1" y2="0"><stop offset="0" stop-color="#d4dcea"/><stop offset="0.35" stop-color="#a4b6d0"/><stop offset="1" stop-color="#5c7cae"/></linearGradient>
<linearGradient id="mons" x1="0" y1="0" x2="1" y2="0"><stop offset="0" stop-color="#7088a8"/><stop offset="0.5" stop-color="#3c4654"/><stop offset="1" stop-color="#2c323c"/></linearGradient>
<linearGradient id="cam" x1="0" y1="0" x2="1" y2="1"><stop offset="0" stop-color="#f4f4f4"/><stop offset="0.5" stop-color="#d0d0d0"/><stop offset="1" stop-color="#a0a0a0"/></linearGradient>
<linearGradient id="bing" x1="0" y1="0" x2="1" y2="1"><stop offset="0" stop-color="#bfe4fa"/><stop offset="0.5" stop-color="#7cc0ee"/><stop offset="1" stop-color="#c8ecfc"/></linearGradient>
<radialGradient id="bw" cx="0.4" cy="0.3" r="0.75"><stop offset="0" stop-color="#ffffff"/><stop offset="0.25" stop-color="#ececec"/><stop offset="1" stop-color="#b4b4b4"/></radialGradient><radialGradient id="bl" cx="0.4" cy="0.3" r="0.75"><stop offset="0" stop-color="#fafafa"/><stop offset="0.25" stop-color="#d6d6d6"/><stop offset="1" stop-color="#909090"/></radialGradient><radialGradient id="bm" cx="0.4" cy="0.3" r="0.75"><stop offset="0" stop-color="#e0e0e0"/><stop offset="0.25" stop-color="#a8a8a8"/><stop offset="1" stop-color="#686868"/></radialGradient><radialGradient id="bd" cx="0.4" cy="0.3" r="0.75"><stop offset="0" stop-color="#a8a8a8"/><stop offset="0.25" stop-color="#6a6a6a"/><stop offset="1" stop-color="#3a3a3a"/></radialGradient><radialGradient id="bk" cx="0.4" cy="0.3" r="0.75"><stop offset="0" stop-color="#7a7a7a"/><stop offset="0.25" stop-color="#4a4a4a"/><stop offset="1" stop-color="#303030"/></radialGradient><radialGradient id="bR" cx="0.4" cy="0.3" r="0.75"><stop offset="0" stop-color="#ffd0d8"/><stop offset="0.25" stop-color="#e00030"/><stop offset="1" stop-color="#d80030"/></radialGradient><radialGradient id="bG" cx="0.4" cy="0.3" r="0.75"><stop offset="0" stop-color="#e0ffd0"/><stop offset="0.25" stop-color="#48d800"/><stop offset="1" stop-color="#40d000"/></radialGradient><radialGradient id="bB" cx="0.4" cy="0.3" r="0.75"><stop offset="0" stop-color="#d0d0ff"/><stop offset="0.25" stop-color="#0000e0"/><stop offset="1" stop-color="#0000d0"/></radialGradient><radialGradient id="br" cx="0.4" cy="0.3" r="0.75"><stop offset="0" stop-color="#ff9090"/><stop offset="0.25" stop-color="#f03030"/><stop offset="1" stop-color="#a01010"/></radialGradient><radialGradient id="bb" cx="0.4" cy="0.3" r="0.75"><stop offset="0" stop-color="#a0c8ff"/><stop offset="0.25" stop-color="#2060e0"/><stop offset="1" stop-color="#1040b0"/></radialGradient><radialGradient id="bg" cx="0.4" cy="0.3" r="0.75"><stop offset="0" stop-color="#a0ffa0"/><stop offset="0.25" stop-color="#20d030"/><stop offset="1" stop-color="#109020"/></radialGradient><radialGradient id="bc" cx="0.4" cy="0.3" r="0.75"><stop offset="0" stop-color="#c0ffff"/><stop offset="0.25" stop-color="#40f0f0"/><stop offset="1" stop-color="#10a0a8"/></radialGradient><radialGradient id="bp" cx="0.4" cy="0.3" r="0.75"><stop offset="0" stop-color="#ffc0ff"/><stop offset="0.25" stop-color="#d060f0"/><stop offset="1" stop-color="#8030b0"/></radialGradient><radialGradient id="by" cx="0.4" cy="0.3" r="0.75"><stop offset="0" stop-color="#ffffa0"/><stop offset="0.25" stop-color="#f8e010"/><stop offset="1" stop-color="#c0a000"/></radialGradient></defs></svg>
<svg style="position:absolute;left:12px;top:53px;overflow:visible;" width="32" height="32" viewBox="0 0 32 32"><path d="M7.5 4.5 H19.5 L24.5 9.5 V27.5 H7.5 Z" fill="url(#docg)" stroke="#5a78b4"/>
<path d="M19.5 4.5 V9.5 H24.5 Z" fill="#dfe9fd" stroke="#5a78b4" stroke-linejoin="round"/></svg>
<svg style="position:absolute;left:51px;top:53px;overflow:visible;" width="32" height="32" viewBox="0 0 32 32"><path d="M4.8 26 V10 Q4.8 7.6 7 7.6 H11.5 L13.5 10 H21.5 V15 H8Z" fill="#f8d860" stroke="#dca820" stroke-width="0.9"/>
<path d="M5 26.6 L9 15 Q9.5 14 11 14 L14 13.5 L17 11.5 H27 Q27.6 11.6 27.2 12.6 L23 24 L9 27.2 Z" fill="url(#fold)" stroke="#e0a818" stroke-width="0.9"/>
<path d="M13.5 7.8 Q20.5 3.5 24 10.8 L27 9.6 L23 17.5 L16.6 13.6 L20 12.4 Q18.2 8 13.5 7.8Z" fill="#48c838" stroke="#2a9020" stroke-width="0.8"/></svg>
<svg style="position:absolute;left:90px;top:53px;overflow:visible;" width="32" height="32" viewBox="0 0 32 32"><path d="M6.5 7.6 Q6.5 6.5 7.6 6.5 H25.5 L27.5 8.5 V26.6 Q27.5 27.6 26.4 27.6 H7.6 Q6.5 27.6 6.5 26.6 Z" fill="#5a5ac8" stroke="#4848a8" stroke-width="0.8"/>
<rect x="24.4" y="8" width="3" height="19" fill="#3c3ca0"/>
<rect x="9.6" y="6.6" width="14.6" height="10.2" fill="#f4f4f4" stroke="#c8c8d8" stroke-width="0.6"/>
<path d="M11.2 9.4h11.4 M11.2 11.4h11.4 M11.2 13.4h11.4" stroke="#a4a4a4" stroke-width="0.8"/>
<rect x="12" y="20" width="10" height="7.6" fill="#e4e4e4"/><path d="M16 27.6 L22 20 V27.6Z" fill="#b0b0b0"/>
<rect x="13" y="21" width="3" height="5.4" fill="#3c3cb0"/></svg>
<svg style="position:absolute;left:137px;top:53px;overflow:visible;" width="32" height="32" viewBox="0 0 32 32"><path d="M8.2 6.2 L16.8 21" stroke="#707a88" stroke-width="1.7"/><path d="M8.9 7 L16 19" stroke="#e0e4ea" stroke-width="0.6"/>
<path d="M20 6.2 L11.4 21" stroke="#707a88" stroke-width="1.7"/><path d="M19.3 7 L12.2 19" stroke="#e0e4ea" stroke-width="0.6"/>
<ellipse cx="9.8" cy="23.4" rx="2.9" ry="3.3" transform="rotate(25 9.8 23.4)" fill="#e8eefc" stroke="#0038b4" stroke-width="2.3"/>
<ellipse cx="18.6" cy="23.4" rx="2.9" ry="3.3" transform="rotate(-25 18.6 23.4)" fill="#e8eefc" stroke="#0038b4" stroke-width="2.3"/></svg>
<svg style="position:absolute;left:176px;top:53px;overflow:visible;" width="32" height="32" viewBox="0 0 32 32"><path d="M3.5 5.5 H12.5 L16.5 9.5 V21.5 H3.5 Z" fill="url(#docg)" stroke="#6e6eb0" stroke-width="1"/><path d="M12.5 5.5 V9.5 H16.5" fill="#e4ecfc" stroke="#6e6eb0" stroke-width="1"/><path d="M10.5 11.5 H19.5 L23.5 15.5 V27.5 H10.5 Z" fill="url(#docg)" stroke="#6e6eb0" stroke-width="1"/><path d="M19.5 11.5 V15.5 H23.5" fill="#e4ecfc" stroke="#6e6eb0" stroke-width="1"/></svg>
<svg style="position:absolute;left:215px;top:53px;overflow:visible;" width="32" height="32" viewBox="0 0 32 32"><rect x="3.5" y="6.5" width="17" height="20" rx="2" fill="url(#clipg)" stroke="#dca820" stroke-width="1"/>
<path d="M7.5 8.6 L8.5 5.6 H15.5 L16.5 8.6 Z" fill="#d8dce8" stroke="#8890a8" stroke-width="0.9"/><path d="M9.5 12.5 H18.5 L22.5 16.5 V28.5 H9.5 Z" fill="url(#docg)" stroke="#6e6eb0" stroke-width="1"/><path d="M18.5 12.5 V16.5 H22.5" fill="#e4ecfc" stroke="#6e6eb0" stroke-width="1"/></svg>
<svg style="position:absolute;left:260px;top:53px;overflow:visible;" width="32" height="32" viewBox="0 0 32 32"><path d="M6 13 L8 7 L14 6.2 L15.5 12 Z" fill="#fdfdff" stroke="#a8bcdc" stroke-width="0.8"/>
<path d="M2.6 18 Q2.2 14.6 6 13.4 L17 11.6 Q23 11.6 24.6 15 L24.8 21 Q24 23.6 20 24 L8 25 Q3.2 24.6 2.8 21 Z" fill="#9cc0f0" stroke="#6c94d4" stroke-width="0.8"/>
<path d="M4 17 Q10 14.4 17 13.4 L22 14.6 L23.6 17.6 L10 20.4 Z" fill="#d2e4fc"/>
<path d="M9 14.8 L15.6 13.2 L18.6 17.4 L11.4 19.4 Z" fill="#c8ccd4" stroke="#8c94a4" stroke-width="0.6"/>
<path d="M10.8 15.6 L15 14.6 L16.4 16.4 L12 17.6 Z" fill="#282c34"/>
<path d="M10.6 22.6 L19.6 21 L24.6 25 L15 27.8 Z" fill="#f0f8ff" stroke="#58a0e8" stroke-width="0.9"/>
<path d="M14 27 L24 24.6" stroke="#2c84e0" stroke-width="1.2"/></svg>
<svg style="position:absolute;left:305px;top:53px;overflow:visible;" width="32" height="32" viewBox="0 0 32 32"><circle cx="15.5" cy="17.5" r="11.4" fill="#f0f4fc" stroke="#5078c8" stroke-width="0.9"/>
<circle cx="15.5" cy="17.5" r="10" fill="url(#helpg)"/>
<path d="M6.2 15 A9.6 9.6 0 0 1 24 12.6 Q15 13 6.2 19 Z" fill="#ffffff" fill-opacity="0.22"/>
<text x="15.6" y="24.2" text-anchor="middle" font-family="Liberation Sans, sans-serif" font-weight="bold" font-size="18.5" fill="#f4f6ff">?</text></svg>
<svg style="position:absolute;left:357px;top:53px;overflow:visible;" width="32" height="32" viewBox="0 0 32 32"><circle cx="27" cy="24.4" r="7.3" fill="url(#bk)"/><circle cx="20.4" cy="22.4" r="6.6" fill="url(#bd)"/><circle cx="14" cy="19.2" r="6" fill="url(#bm)"/><circle cx="6.6" cy="17.6" r="5" fill="url(#bl)" stroke="#808080" stroke-width="0.5"/><circle cx="6.4" cy="10" r="5" fill="url(#bl)" stroke="#909090" stroke-width="0.5"/><circle cx="12.4" cy="4.8" r="4.6" fill="url(#bw)" stroke="#a0a0a0" stroke-width="0.5"/></svg>
<svg style="position:absolute;left:396px;top:53px;overflow:visible;" width="32" height="32" viewBox="0 0 32 32"><circle cx="17.4" cy="7.8" r="7.7" fill="url(#bR)"/><circle cx="8.6" cy="24.2" r="7.7" fill="url(#bG)"/><circle cx="25.2" cy="24.2" r="7.7" fill="url(#bB)"/></svg>
<svg style="position:absolute;left:435px;top:53px;overflow:visible;" width="32" height="32" viewBox="0 0 32 32"><circle cx="9" cy="23.6" r="7.6" fill="url(#br)" stroke="#801010" stroke-width="0.5"/><circle cx="15.6" cy="22.4" r="7.2" fill="url(#bb)" stroke="#1030a0" stroke-width="0.5"/><circle cx="21.6" cy="18" r="6.2" fill="url(#bg)" stroke="#108020" stroke-width="0.5"/><circle cx="28" cy="17.2" r="5" fill="url(#bc)" stroke="#109098" stroke-width="0.5"/><circle cx="28" cy="9.4" r="5" fill="url(#bp)" stroke="#7030a0" stroke-width="0.5"/><circle cx="21.6" cy="3.6" r="4.4" fill="url(#by)" stroke="#b09000" stroke-width="0.5"/></svg>
<svg style="position:absolute;left:474px;top:53px;overflow:visible;" width="32" height="32" viewBox="0 0 32 32"><circle cx="26" cy="25.4" r="6.6" fill="url(#bk)"/><circle cx="19" cy="27" r="5.6" fill="url(#bd)"/><circle cx="12.6" cy="27" r="5.4" fill="url(#bb)"/><circle cx="6.4" cy="25.4" r="6" fill="url(#br)"/><circle cx="21.4" cy="19.6" r="5.4" fill="url(#bg)"/><circle cx="9.4" cy="19.4" r="5.2" fill="url(#bl)"/><circle cx="4.8" cy="13.4" r="4.8" fill="url(#bl)"/><circle cx="5.4" cy="7.6" r="4.4" fill="url(#bm)"/><circle cx="11.4" cy="3.4" r="4.2" fill="url(#bw)"/><circle cx="20.6" cy="3.6" r="4.2" fill="url(#by)"/><circle cx="27" cy="7.8" r="4.4" fill="url(#bp)"/><circle cx="27.6" cy="14" r="4.6" fill="url(#bc)"/></svg>
<svg style="position:absolute;left:520px;top:53px;overflow:visible;" width="32" height="32" viewBox="0 0 32 32"><path d="M1.4 6.6 L9 4.4 L26 1.8 L31 3.4 V22 L7.6 29.4 L1.6 24.4 Z" fill="#4a4a4a"/>
<path d="M1.6 6.8 L9 4.8 L26 2.2 L30.4 3.8 L30.4 21 L7.4 28.4 L1.8 24 Z" fill="url(#cam)" stroke="#585858" stroke-width="0.7"/>
<path d="M7.6 8.6 L7.4 28.2 L1.8 24 L1.6 6.8 Z" fill="#f0f0f0" stroke="#8c8c8c" stroke-width="0.5"/>
<path d="M3 9.4 L5.8 10.6 V24 L3 22 Z" fill="#d8d8d8" stroke="#a0a0a0" stroke-width="0.5"/>
<path d="M8 8.4 L30.4 3.8" stroke="#fafafa" stroke-width="1"/>
<ellipse cx="10.4" cy="5.6" rx="3.4" ry="1.3" fill="#e0e0e0" stroke="#8c8c8c" stroke-width="0.5"/>
<rect x="23.6" y="3.8" width="5" height="2.6" fill="#909090" transform="rotate(-10 26 5)"/>
<ellipse cx="21.6" cy="15.4" rx="5.6" ry="6.2" fill="#3c3c3c" stroke="#e8e8e8" stroke-width="1.3"/>
<ellipse cx="21.6" cy="15.4" rx="3.4" ry="3.8" fill="#1c1c1c" stroke="#707070" stroke-width="0.8"/>
<circle cx="21.6" cy="15.6" r="1.6" fill="#1060e0"/></svg>
<svg style="position:absolute;left:559px;top:53px;overflow:visible;" width="32" height="32" viewBox="0 0 32 32"><path d="M5.6 2 L28.6 12.2 Q29.4 13 28.6 14 L7 27.6 Q5.6 28 5.4 26.6 L5.2 3 Q5.2 1.8 5.6 2Z" fill="url(#playg)" stroke="#28b83c" stroke-width="0.8"/>
<path d="M6.2 22.4 L28.2 12.8 L28.4 14 L7 27.2 L6 26.4Z" fill="#1cc42c"/>
<path d="M6.4 22.4 L28 12.8" stroke="#8cf09a" stroke-width="0.9"/>
<path d="M7 4.6 L24 12.2 L7 19.6Z" fill="#ffffff" fill-opacity="0.2"/></svg>
<svg style="position:absolute;left:613px;top:53px;overflow:visible;" width="32" height="32" viewBox="0 0 32 32"><path d="M2 7.6 Q2.2 6.6 3.4 6.2 L27 0.6 H30.4 Q31.6 0.8 31.6 2 V26.4 Q31.6 28 30.2 28 H8 L6.6 27 H2 Q0.4 27 0.4 25.4 V22.4 Z" fill="#566476"/>
<path d="M27.6 1.2 H30 Q31 1.2 31 2.2 V26.2 Q31 27.4 29.8 27.4 H27.6 Z" fill="url(#mons)"/>
<path d="M1.2 22.6 L27.4 21.4 V27.4 H8.2 L6.8 26.4 H2.2 Q1.2 26.4 1.2 25.4 Z" fill="url(#monb)"/>
<path d="M2.8 7.8 L27.2 1.6 V21.4 L1.4 22.6 Z" fill="#ffffff"/>
<path d="M2.4 7.4 L27.2 1.2" stroke="#506074" stroke-width="1.1" stroke-dasharray="2.2 0.5" fill="none"/>
<path d="M2.4 7.6 L1 22.6" stroke="#6c7c94" stroke-width="0.9" fill="none"/>
<rect x="2.4" y="24.6" width="3.4" height="1.6" fill="#4a5260"/><rect x="22" y="24.6" width="4.4" height="1.6" fill="#6c7484"/><rect x="13.4" y="24.8" width="1.4" height="1.4" fill="#7890b0"/>
<path d="M12 28 H22 L23 30 H11 Z" fill="#3a424e"/>
<path d="M4.6 31.2 L6 30 H27 L23.6 31.8 H5 Z" fill="#39414d"/><g fill="#fde7bd"><rect x="5" y="10.4" width="3.2" height="1.6"/><rect x="5" y="13.2" width="3.2" height="1.6"/><rect x="5" y="16.0" width="3.2" height="1.6"/><rect x="5" y="18.8" width="3.2" height="1.6"/><rect x="11" y="9.6" width="4.6" height="1.6"/><rect x="11" y="12.4" width="4.6" height="1.6"/><rect x="11" y="15.2" width="4.6" height="1.6"/><rect x="11" y="18.0" width="4.6" height="1.6"/><rect x="17.4" y="8.8" width="3.2" height="1.6"/><rect x="17.4" y="11.6" width="3.2" height="1.6"/><rect x="17.4" y="14.4" width="3.2" height="1.6"/><rect x="17.4" y="17.2" width="3.2" height="1.6"/><rect x="22.4" y="8.1" width="2.6" height="1.6"/><rect x="22.4" y="10.9" width="2.6" height="1.6"/><rect x="22.4" y="13.7" width="2.6" height="1.6"/><rect x="22.4" y="16.5" width="2.6" height="1.6"/></g><path d="M5 9.4 L25 6" stroke="#aab6cc" stroke-width="1" stroke-dasharray="2 1.6" fill="none"/><path d="M4.6 11 V20.6 H25.4 V6.6" stroke="#fbe2b0" stroke-width="0.7" fill="none"/></svg>
<svg style="position:absolute;left:658px;top:53px;overflow:visible;" width="32" height="32" viewBox="0 0 32 32"><path d="M2 7.6 Q2.2 6.6 3.4 6.2 L27 0.6 H30.4 Q31.6 0.8 31.6 2 V26.4 Q31.6 28 30.2 28 H8 L6.6 27 H2 Q0.4 27 0.4 25.4 V22.4 Z" fill="#566476"/>
<path d="M27.6 1.2 H30 Q31 1.2 31 2.2 V26.2 Q31 27.4 29.8 27.4 H27.6 Z" fill="url(#mons)"/>
<path d="M1.2 22.6 L27.4 21.4 V27.4 H8.2 L6.8 26.4 H2.2 Q1.2 26.4 1.2 25.4 Z" fill="url(#monb)"/>
<path d="M2.8 7.8 L27.2 1.6 V21.4 L1.4 22.6 Z" fill="#ffffff"/>
<path d="M2.4 7.4 L27.2 1.2" stroke="#506074" stroke-width="1.1" stroke-dasharray="2.2 0.5" fill="none"/>
<path d="M2.4 7.6 L1 22.6" stroke="#6c7c94" stroke-width="0.9" fill="none"/>
<rect x="2.4" y="24.6" width="3.4" height="1.6" fill="#4a5260"/><rect x="22" y="24.6" width="4.4" height="1.6" fill="#6c7484"/><rect x="13.4" y="24.8" width="1.4" height="1.4" fill="#7890b0"/>
<path d="M12 28 H22 L23 30 H11 Z" fill="#3a424e"/>
<path d="M4.6 31.2 L6 30 H27 L23.6 31.8 H5 Z" fill="#39414d"/><path d="M5 10.5 L25 6.5 M5 14 L25 11 M5 17.5 L25 15.5" stroke="#ececec" stroke-width="0.6" fill="none"/><path d="M3.8 21.2 Q9 21 13 18.4 Q20 14 22.8 7.6 Q23.6 6 23.4 4.6" stroke="#d8d400" stroke-width="1.4" fill="none"/></svg>
<svg style="position:absolute;left:697px;top:53px;overflow:visible;" width="32" height="32" viewBox="0 0 32 32"><path d="M2 7.6 Q2.2 6.6 3.4 6.2 L27 0.6 H30.4 Q31.6 0.8 31.6 2 V26.4 Q31.6 28 30.2 28 H8 L6.6 27 H2 Q0.4 27 0.4 25.4 V22.4 Z" fill="#566476"/>
<path d="M27.6 1.2 H30 Q31 1.2 31 2.2 V26.2 Q31 27.4 29.8 27.4 H27.6 Z" fill="url(#mons)"/>
<path d="M1.2 22.6 L27.4 21.4 V27.4 H8.2 L6.8 26.4 H2.2 Q1.2 26.4 1.2 25.4 Z" fill="url(#monb)"/>
<path d="M2.8 7.8 L27.2 1.6 V21.4 L1.4 22.6 Z" fill="#ffffff"/>
<path d="M2.4 7.4 L27.2 1.2" stroke="#506074" stroke-width="1.1" stroke-dasharray="2.2 0.5" fill="none"/>
<path d="M2.4 7.6 L1 22.6" stroke="#6c7c94" stroke-width="0.9" fill="none"/>
<rect x="2.4" y="24.6" width="3.4" height="1.6" fill="#4a5260"/><rect x="22" y="24.6" width="4.4" height="1.6" fill="#6c7484"/><rect x="13.4" y="24.8" width="1.4" height="1.4" fill="#7890b0"/>
<path d="M12 28 H22 L23 30 H11 Z" fill="#3a424e"/>
<path d="M4.6 31.2 L6 30 H27 L23.6 31.8 H5 Z" fill="#39414d"/><path d="M5 10.5 L25 6.5 M5 14 L25 11 M5 17.5 L25 15.5" stroke="#ececec" stroke-width="0.6" fill="none"/><path d="M7.6 15.6 L10.4 13.6 H12 L15.4 16.6 H17.6 L20.6 15 L23 13.2" stroke="#d8d400" stroke-width="1.4" fill="none"/></svg>
<svg style="position:absolute;left:736px;top:53px;overflow:visible;" width="32" height="32" viewBox="0 0 32 32"><path d="M2 7.6 Q2.2 6.6 3.4 6.2 L27 0.6 H30.4 Q31.6 0.8 31.6 2 V26.4 Q31.6 28 30.2 28 H8 L6.6 27 H2 Q0.4 27 0.4 25.4 V22.4 Z" fill="#566476"/>
<path d="M27.6 1.2 H30 Q31 1.2 31 2.2 V26.2 Q31 27.4 29.8 27.4 H27.6 Z" fill="url(#mons)"/>
<path d="M1.2 22.6 L27.4 21.4 V27.4 H8.2 L6.8 26.4 H2.2 Q1.2 26.4 1.2 25.4 Z" fill="url(#monb)"/>
<path d="M2.8 7.8 L27.2 1.6 V21.4 L1.4 22.6 Z" fill="#ffffff"/>
<path d="M2.4 7.4 L27.2 1.2" stroke="#506074" stroke-width="1.1" stroke-dasharray="2.2 0.5" fill="none"/>
<path d="M2.4 7.6 L1 22.6" stroke="#6c7c94" stroke-width="0.9" fill="none"/>
<rect x="2.4" y="24.6" width="3.4" height="1.6" fill="#4a5260"/><rect x="22" y="24.6" width="4.4" height="1.6" fill="#6c7484"/><rect x="13.4" y="24.8" width="1.4" height="1.4" fill="#7890b0"/>
<path d="M12 28 H22 L23 30 H11 Z" fill="#3a424e"/>
<path d="M4.6 31.2 L6 30 H27 L23.6 31.8 H5 Z" fill="#39414d"/><path d="M3.4 20.4 L4.4 17.4 L7.4 14.6 L11 14.4 L13.4 13.6 L16 12.6 L18 14.6 L20.4 16.2 L23 14.6 L27 14.4" stroke="#009a10" stroke-width="1.9" fill="none"/><path d="M7 9.4 L8.4 8.6 L10.4 9.2 L13.2 14.4 L14.6 14 L16.6 8 L17.8 7 L21.6 12 L24 12.6 L26.6 10.6" stroke="#e85820" stroke-width="1.7" fill="none"/><path d="M4.4 13.4 L6 12 L11 16.6 L13.2 17 L15.8 15 L18.4 16.4 L21 18 L23.6 20.4" stroke="#0028a8" stroke-width="1.9" fill="none"/></svg>
<svg style="position:absolute;left:775px;top:53px;overflow:visible;" width="32" height="32" viewBox="0 0 32 32"><path d="M2 7.6 Q2.2 6.6 3.4 6.2 L27 0.6 H30.4 Q31.6 0.8 31.6 2 V26.4 Q31.6 28 30.2 28 H8 L6.6 27 H2 Q0.4 27 0.4 25.4 V22.4 Z" fill="#566476"/>
<path d="M27.6 1.2 H30 Q31 1.2 31 2.2 V26.2 Q31 27.4 29.8 27.4 H27.6 Z" fill="url(#mons)"/>
<path d="M1.2 22.6 L27.4 21.4 V27.4 H8.2 L6.8 26.4 H2.2 Q1.2 26.4 1.2 25.4 Z" fill="url(#monb)"/>
<path d="M2.8 7.8 L27.2 1.6 V21.4 L1.4 22.6 Z" fill="#ffffff"/>
<path d="M2.4 7.4 L27.2 1.2" stroke="#506074" stroke-width="1.1" stroke-dasharray="2.2 0.5" fill="none"/>
<path d="M2.4 7.6 L1 22.6" stroke="#6c7c94" stroke-width="0.9" fill="none"/>
<rect x="2.4" y="24.6" width="3.4" height="1.6" fill="#4a5260"/><rect x="22" y="24.6" width="4.4" height="1.6" fill="#6c7484"/><rect x="13.4" y="24.8" width="1.4" height="1.4" fill="#7890b0"/>
<path d="M12 28 H22 L23 30 H11 Z" fill="#3a424e"/>
<path d="M4.6 31.2 L6 30 H27 L23.6 31.8 H5 Z" fill="#39414d"/><path d="M4.6 10 V20.6 H25.4" stroke="#dcdcdc" stroke-width="0.7" fill="none"/><path d="M5 13 H25 M5 16.5 H25 M5 8.6 L25 6.6" stroke="#f0f0f0" stroke-width="0.6" fill="none"/><path d="M25.4 4.6 V20.6" stroke="#b8e8b8" stroke-width="0.8" stroke-dasharray="1 1.4"/><path d="M5.4 9.6 L8.6 14 L12.6 16.6 L18.6 11.6 L24 11" stroke="#7070e4" stroke-width="0.9" fill="none"/><circle cx="24" cy="11" r="0.6" fill="#d06070"/></svg>
<svg style="position:absolute;left:820px;top:53px;overflow:visible;" width="32" height="32" viewBox="0 0 32 32"><path d="M2 7.6 Q2.2 6.6 3.4 6.2 L27 0.6 H30.4 Q31.6 0.8 31.6 2 V26.4 Q31.6 28 30.2 28 H8 L6.6 27 H2 Q0.4 27 0.4 25.4 V22.4 Z" fill="#566476"/>
<path d="M27.6 1.2 H30 Q31 1.2 31 2.2 V26.2 Q31 27.4 29.8 27.4 H27.6 Z" fill="url(#mons)"/>
<path d="M1.2 22.6 L27.4 21.4 V27.4 H8.2 L6.8 26.4 H2.2 Q1.2 26.4 1.2 25.4 Z" fill="url(#monb)"/>
<path d="M2.8 7.8 L27.2 1.6 V21.4 L1.4 22.6 Z" fill="#ffffff"/>
<path d="M2.4 7.4 L27.2 1.2" stroke="#506074" stroke-width="1.1" stroke-dasharray="2.2 0.5" fill="none"/>
<path d="M2.4 7.6 L1 22.6" stroke="#6c7c94" stroke-width="0.9" fill="none"/>
<rect x="2.4" y="24.6" width="3.4" height="1.6" fill="#4a5260"/><rect x="22" y="24.6" width="4.4" height="1.6" fill="#6c7484"/><rect x="13.4" y="24.8" width="1.4" height="1.4" fill="#7890b0"/>
<path d="M12 28 H22 L23 30 H11 Z" fill="#3a424e"/>
<path d="M4.6 31.2 L6 30 H27 L23.6 31.8 H5 Z" fill="#39414d"/><defs><radialGradient id="cgg" gradientUnits="userSpaceOnUse" cx="10.2" cy="6.6" r="9"><stop offset="0" stop-color="#10e800"/><stop offset="0.35" stop-color="#10e800" stop-opacity="0.9"/><stop offset="1" stop-color="#10e800" stop-opacity="0"/></radialGradient><radialGradient id="cgb" gradientUnits="userSpaceOnUse" cx="12.2" cy="22.4" r="7.5"><stop offset="0" stop-color="#1000ff"/><stop offset="0.35" stop-color="#1000ff" stop-opacity="0.9"/><stop offset="1" stop-color="#1000ff" stop-opacity="0"/></radialGradient><radialGradient id="cgr" gradientUnits="userSpaceOnUse" cx="23.4" cy="17.4" r="7.5"><stop offset="0" stop-color="#ff0000"/><stop offset="0.35" stop-color="#ff0000" stop-opacity="0.9"/><stop offset="1" stop-color="#ff0000" stop-opacity="0"/></radialGradient><radialGradient id="cgc" gradientUnits="userSpaceOnUse" cx="9.8" cy="15" r="6"><stop offset="0" stop-color="#00f0f0"/><stop offset="0.35" stop-color="#00f0f0" stop-opacity="0.9"/><stop offset="1" stop-color="#00f0f0" stop-opacity="0"/></radialGradient><radialGradient id="cgy" gradientUnits="userSpaceOnUse" cx="17.6" cy="11.4" r="5"><stop offset="0" stop-color="#f8f000"/><stop offset="0.35" stop-color="#f8f000" stop-opacity="0.9"/><stop offset="1" stop-color="#f8f000" stop-opacity="0"/></radialGradient><radialGradient id="cgm" gradientUnits="userSpaceOnUse" cx="17.6" cy="20.4" r="5"><stop offset="0" stop-color="#ff20e0"/><stop offset="0.35" stop-color="#ff20e0" stop-opacity="0.9"/><stop offset="1" stop-color="#ff20e0" stop-opacity="0"/></radialGradient><clipPath id="ciec"><path d="M9 6.6 Q10.2 5.2 11.4 6.4 L23.8 17.4 L12.6 23.2 Q11.6 23 11.2 21.6 Q9.4 14 9 6.6 Z"/></clipPath></defs><g clip-path="url(#ciec)"><rect x="8" y="5" width="17" height="19" fill="#ffffff"/><rect x="6" y="3" width="20" height="22" fill="url(#cgc)"/><rect x="6" y="3" width="20" height="22" fill="url(#cgy)"/><rect x="6" y="3" width="20" height="22" fill="url(#cgm)"/><rect x="6" y="3" width="20" height="22" fill="url(#cgg)"/><rect x="6" y="3" width="20" height="22" fill="url(#cgb)"/><rect x="6" y="3" width="20" height="22" fill="url(#cgr)"/></g></svg>
<svg style="position:absolute;left:865px;top:53px;overflow:visible;" width="32" height="32" viewBox="0 0 32 32"><path d="M2 7.6 Q2.2 6.6 3.4 6.2 L27 0.6 H30.4 Q31.6 0.8 31.6 2 V26.4 Q31.6 28 30.2 28 H8 L6.6 27 H2 Q0.4 27 0.4 25.4 V22.4 Z" fill="#566476"/>
<path d="M27.6 1.2 H30 Q31 1.2 31 2.2 V26.2 Q31 27.4 29.8 27.4 H27.6 Z" fill="url(#mons)"/>
<path d="M1.2 22.6 L27.4 21.4 V27.4 H8.2 L6.8 26.4 H2.2 Q1.2 26.4 1.2 25.4 Z" fill="url(#monb)"/>
<path d="M2.8 7.8 L27.2 1.6 V21.4 L1.4 22.6 Z" fill="#ffffff"/>
<path d="M2.4 7.4 L27.2 1.2" stroke="#506074" stroke-width="1.1" stroke-dasharray="2.2 0.5" fill="none"/>
<path d="M2.4 7.6 L1 22.6" stroke="#6c7c94" stroke-width="0.9" fill="none"/>
<rect x="2.4" y="24.6" width="3.4" height="1.6" fill="#4a5260"/><rect x="22" y="24.6" width="4.4" height="1.6" fill="#6c7484"/><rect x="13.4" y="24.8" width="1.4" height="1.4" fill="#7890b0"/>
<path d="M12 28 H22 L23 30 H11 Z" fill="#3a424e"/>
<path d="M4.6 31.2 L6 30 H27 L23.6 31.8 H5 Z" fill="#39414d"/><path d="M5 10.5 L25 6.5 M5 14 L25 11 M5 17.5 L25 15.5" stroke="#ececec" stroke-width="0.6" fill="none"/><path d="M3.6 21.4 H9.4 L11.4 20.2 H13 L15 19 H17 L19 18 H21 L23 17 H24.6 L25.2 16.2" stroke="#d8d400" stroke-width="1.3" fill="none"/></svg>
<svg style="position:absolute;left:904px;top:53px;overflow:visible;" width="32" height="32" viewBox="0 0 32 32"><path d="M2 7.6 Q2.2 6.6 3.4 6.2 L27 0.6 H30.4 Q31.6 0.8 31.6 2 V26.4 Q31.6 28 30.2 28 H8 L6.6 27 H2 Q0.4 27 0.4 25.4 V22.4 Z" fill="#566476"/>
<path d="M27.6 1.2 H30 Q31 1.2 31 2.2 V26.2 Q31 27.4 29.8 27.4 H27.6 Z" fill="url(#mons)"/>
<path d="M1.2 22.6 L27.4 21.4 V27.4 H8.2 L6.8 26.4 H2.2 Q1.2 26.4 1.2 25.4 Z" fill="url(#monb)"/>
<path d="M2.8 7.8 L27.2 1.6 V21.4 L1.4 22.6 Z" fill="#ffffff"/>
<path d="M2.4 7.4 L27.2 1.2" stroke="#506074" stroke-width="1.1" stroke-dasharray="2.2 0.5" fill="none"/>
<path d="M2.4 7.6 L1 22.6" stroke="#6c7c94" stroke-width="0.9" fill="none"/>
<rect x="2.4" y="24.6" width="3.4" height="1.6" fill="#4a5260"/><rect x="22" y="24.6" width="4.4" height="1.6" fill="#6c7484"/><rect x="13.4" y="24.8" width="1.4" height="1.4" fill="#7890b0"/>
<path d="M12 28 H22 L23 30 H11 Z" fill="#3a424e"/>
<path d="M4.6 31.2 L6 30 H27 L23.6 31.8 H5 Z" fill="#39414d"/><path d="M5 10.5 L25 6.5 M5 14 L25 11 M5 17.5 L25 15.5" stroke="#ececec" stroke-width="0.6" fill="none"/><path d="M4.4 13.6 H5.8 L7.4 12.4 H9 L11 11 H13 L15 9.6 H17 L19.4 8.2 H21.4 L24.6 6.4 L25.2 5.4" stroke="#d8d400" stroke-width="1.3" fill="none"/></svg>
<svg style="position:absolute;left:949px;top:53px;overflow:visible;" width="32" height="32" viewBox="0 0 32 32"><path d="M2 7.6 Q2.2 6.6 3.4 6.2 L27 0.6 H30.4 Q31.6 0.8 31.6 2 V26.4 Q31.6 28 30.2 28 H8 L6.6 27 H2 Q0.4 27 0.4 25.4 V22.4 Z" fill="#566476"/>
<path d="M27.6 1.2 H30 Q31 1.2 31 2.2 V26.2 Q31 27.4 29.8 27.4 H27.6 Z" fill="url(#mons)"/>
<path d="M1.2 22.6 L27.4 21.4 V27.4 H8.2 L6.8 26.4 H2.2 Q1.2 26.4 1.2 25.4 Z" fill="url(#monb)"/>
<path d="M2.8 7.8 L27.2 1.6 V21.4 L1.4 22.6 Z" fill="#ffffff"/>
<path d="M2.4 7.4 L27.2 1.2" stroke="#506074" stroke-width="1.1" stroke-dasharray="2.2 0.5" fill="none"/>
<path d="M2.4 7.6 L1 22.6" stroke="#6c7c94" stroke-width="0.9" fill="none"/>
<rect x="2.4" y="24.6" width="3.4" height="1.6" fill="#4a5260"/><rect x="22" y="24.6" width="4.4" height="1.6" fill="#6c7484"/><rect x="13.4" y="24.8" width="1.4" height="1.4" fill="#7890b0"/>
<path d="M12 28 H22 L23 30 H11 Z" fill="#3a424e"/>
<path d="M4.6 31.2 L6 30 H27 L23.6 31.8 H5 Z" fill="#39414d"/><polyline points="4.4,9.6 9.2,9.6 9.8,8.3 14.6,8.3 15.2,6.9 20.0,6.9 20.6,5.6 25.4,5.6" stroke="#e0c800" stroke-width="1.3" fill="none"/><polyline points="4.4,11.6 9.2,11.6 9.8,10.3 14.6,10.3 15.2,8.9 20.0,8.9 20.6,7.6 25.4,7.6" stroke="#00f8f8" stroke-width="1.3" fill="none"/><polyline points="4.4,13.8 9.2,13.8 9.8,12.7 14.6,12.7 15.2,11.5 20.0,11.5 20.6,10.4 25.4,10.4" stroke="#18e010" stroke-width="1.3" fill="none"/><polyline points="4.4,17.4 9.2,17.4 9.8,16.5 14.6,16.5 15.2,15.7 20.0,15.7 20.6,14.8 25.4,14.8" stroke="#ff20e0" stroke-width="1.3" fill="none"/><polyline points="4.4,19.4 9.2,19.4 9.8,18.4 14.6,18.4 15.2,17.4 20.0,17.4 20.6,16.4 25.4,16.4" stroke="#f01010" stroke-width="1.3" fill="none"/><polyline points="4.4,21.6 9.2,21.6 9.8,20.8 14.6,20.8 15.2,20.0 20.0,20.0 20.6,19.2 25.4,19.2" stroke="#1010f0" stroke-width="1.3" fill="none"/></svg>
<svg style="position:absolute;left:988px;top:53px;overflow:visible;" width="32" height="32" viewBox="0 0 32 32"><path d="M2 7.6 Q2.2 6.6 3.4 6.2 L27 0.6 H30.4 Q31.6 0.8 31.6 2 V26.4 Q31.6 28 30.2 28 H8 L6.6 27 H2 Q0.4 27 0.4 25.4 V22.4 Z" fill="#566476"/>
<path d="M27.6 1.2 H30 Q31 1.2 31 2.2 V26.2 Q31 27.4 29.8 27.4 H27.6 Z" fill="url(#mons)"/>
<path d="M1.2 22.6 L27.4 21.4 V27.4 H8.2 L6.8 26.4 H2.2 Q1.2 26.4 1.2 25.4 Z" fill="url(#monb)"/>
<path d="M2.8 7.8 L27.2 1.6 V21.4 L1.4 22.6 Z" fill="#ffffff"/>
<path d="M2.4 7.4 L27.2 1.2" stroke="#506074" stroke-width="1.1" stroke-dasharray="2.2 0.5" fill="none"/>
<path d="M2.4 7.6 L1 22.6" stroke="#6c7c94" stroke-width="0.9" fill="none"/>
<rect x="2.4" y="24.6" width="3.4" height="1.6" fill="#4a5260"/><rect x="22" y="24.6" width="4.4" height="1.6" fill="#6c7484"/><rect x="13.4" y="24.8" width="1.4" height="1.4" fill="#7890b0"/>
<path d="M12 28 H22 L23 30 H11 Z" fill="#3a424e"/>
<path d="M4.6 31.2 L6 30 H27 L23.6 31.8 H5 Z" fill="#39414d"/><path d="M4.6 13.4 H6 L7 11 H11 L12 11.6 H16 L18 9.6 H20 L21.4 10.8 H25" stroke="#f00000" stroke-width="1.5" fill="none"/><path d="M6 13.4 L7.4 12 H10 L11 10.4 H13 L14.4 9.4 H17 L18 10.6" stroke="#00d000" stroke-width="1.5" fill="none"/><path d="M5.6 11.6 H8.6 M15 11 H17.2 M19.4 8.8 H22.4 M23 10.2 H25.2 M25.4 9 H26.4" stroke="#0010e8" stroke-width="1.5" fill="none"/><path d="M21.4 9.8 H24.4" stroke="#00c000" stroke-width="1.3"/><path d="M4.4 21.6 L6 21 L7 19.6 L8 20.6 H10 L12.4 17.6 L13.4 17.4 L15.4 20 L17.6 20.6 L20 18.8 H22.6 L24.4 20.6 H26" stroke="#ff20f0" stroke-width="1.3" fill="none"/></svg>
<svg style="position:absolute;left:1033px;top:53px;overflow:visible;" width="32" height="32" viewBox="0 0 32 32"><path d="M2 7.6 Q2.2 6.6 3.4 6.2 L27 0.6 H30.4 Q31.6 0.8 31.6 2 V26.4 Q31.6 28 30.2 28 H8 L6.6 27 H2 Q0.4 27 0.4 25.4 V22.4 Z" fill="#566476"/>
<path d="M27.6 1.2 H30 Q31 1.2 31 2.2 V26.2 Q31 27.4 29.8 27.4 H27.6 Z" fill="url(#mons)"/>
<path d="M1.2 22.6 L27.4 21.4 V27.4 H8.2 L6.8 26.4 H2.2 Q1.2 26.4 1.2 25.4 Z" fill="url(#monb)"/>
<path d="M2.8 7.8 L27.2 1.6 V21.4 L1.4 22.6 Z" fill="#ffffff"/>
<path d="M2.4 7.4 L27.2 1.2" stroke="#506074" stroke-width="1.1" stroke-dasharray="2.2 0.5" fill="none"/>
<path d="M2.4 7.6 L1 22.6" stroke="#6c7c94" stroke-width="0.9" fill="none"/>
<rect x="2.4" y="24.6" width="3.4" height="1.6" fill="#4a5260"/><rect x="22" y="24.6" width="4.4" height="1.6" fill="#6c7484"/><rect x="13.4" y="24.8" width="1.4" height="1.4" fill="#7890b0"/>
<path d="M12 28 H22 L23 30 H11 Z" fill="#3a424e"/>
<path d="M4.6 31.2 L6 30 H27 L23.6 31.8 H5 Z" fill="#39414d"/><path d="M3.4 9 L26.6 3 V20.8 L3 21.8 Z" fill="#262a2e"/><polyline points="4.6,9.6 9.6,9.6 10.2,8.3 15.2,8.3 15.8,6.9 20.8,6.9 21.4,5.6 26.4,5.6" stroke="#f0e000" stroke-width="1.3" fill="none"/><path d="M3 14 L5 13.2 L7.4 14.2 L10 12.6 L13 13.4 L16 12.4 L19 13.6 L22 12.2 L26.6 11.4" stroke="#18a030" stroke-width="1.4" fill="none"/><path d="M3 15.6 L6 13.8 L9 12.6 L11.6 13.8 L14 11.6 L17 13.6 L20 11.8 L23 13.2 L26.6 10.6" stroke="#f06820" stroke-width="1.2" stroke-dasharray="2.6 1.2" fill="none"/><path d="M3 13.4 L6 14.6 L10 11.8 L14 13 L18 12 L22 13.6 L26.6 12.4" stroke="#1838e0" stroke-width="1.1" stroke-dasharray="2 2.4" fill="none"/><polyline points="3.2,18.6 8.6,18.6 9.2,17.9 14.5,17.9 15.1,17.1 20.4,17.1 21.1,16.4 26.4,16.4" stroke="#f010e8" stroke-width="1.3" fill="none"/><path d="M4.4 20.4 H14.6 L15.6 19.4 H26.6" stroke="#7868e8" stroke-width="1" fill="none"/></svg>
<svg style="position:absolute;left:1818px;top:266px;" width="33" height="28" viewBox="0 0 33 28"><rect x="0.2" y="1" width="2.6" height="22.6" fill="#161616"/><rect x="0.8" y="1.8" width="1.2" height="1.1" fill="#fff"/><rect x="0.8" y="4.0" width="1.2" height="1.1" fill="#fff"/><rect x="0.8" y="6.2" width="1.2" height="1.1" fill="#fff"/><rect x="0.8" y="8.4" width="1.2" height="1.1" fill="#fff"/><rect x="0.8" y="10.6" width="1.2" height="1.1" fill="#fff"/><rect x="0.8" y="12.8" width="1.2" height="1.1" fill="#fff"/><rect x="0.8" y="15.0" width="1.2" height="1.1" fill="#fff"/><rect x="0.8" y="17.2" width="1.2" height="1.1" fill="#fff"/><rect x="0.8" y="19.4" width="1.2" height="1.1" fill="#fff"/><rect x="0.8" y="21.6" width="1.2" height="1.1" fill="#fff"/>
<rect x="29.4" y="4.8" width="2.6" height="22.4" fill="#161616"/><rect x="30" y="5.6" width="1.2" height="1.1" fill="#fff"/><rect x="30" y="7.8" width="1.2" height="1.1" fill="#fff"/><rect x="30" y="10.0" width="1.2" height="1.1" fill="#fff"/><rect x="30" y="12.2" width="1.2" height="1.1" fill="#fff"/><rect x="30" y="14.4" width="1.2" height="1.1" fill="#fff"/><rect x="30" y="16.6" width="1.2" height="1.1" fill="#fff"/><rect x="30" y="18.8" width="1.2" height="1.1" fill="#fff"/><rect x="30" y="21.0" width="1.2" height="1.1" fill="#fff"/><rect x="30" y="23.2" width="1.2" height="1.1" fill="#fff"/><rect x="30" y="25.4" width="1.2" height="1.1" fill="#fff"/>
<path d="M2.8 2 H10 V22.6 L2.8 21.6 Z" fill="#d2d2d2"/>
<path d="M2.8 3 Q7.4 2.4 8.6 4.6 Q9.4 6.8 7.6 8 Q10 9 9 12 Q8 13.6 5.6 13.4 Q9 14.6 8.8 17.6 Q8 20.4 4.8 20 L2.8 20.6 Z" fill="#f6f6f6" stroke="#7c7c7c" stroke-width="0.6"/>
<path d="M2.8 6.6 H6.4 M2.8 13.2 H5 M2.8 18.4 H6" stroke="#1c1c1c" stroke-width="1.3"/>
<path d="M22 5.6 L29.4 6.4 V25 L24 24 Z" fill="#d6d6d6"/>
<path d="M29.4 6.6 Q24.4 5.6 22.8 8.2 Q22 10.4 24.4 11.4 Q21.8 12.6 22.6 15.4 Q23.6 17.4 26.4 17 Q23.8 18.8 25 21.4 Q26.6 23.2 29.4 22.4 Z" fill="#f8f8f8" stroke="#7c7c7c" stroke-width="0.6"/>
<path d="M29.4 13.6 H27" stroke="#1c1c1c" stroke-width="1.3"/>
<path d="M6.4 1 L18.6 0.8 Q20.8 8 23.6 14 Q25.8 18.6 29 21.6 L27.6 24.2 L21.4 27 L11.8 27.2 Q13.6 24 12 19.6 Q9.6 12 9.4 6.4 Q8.6 3 6.4 1 Z" fill="#22202a"/>
<path d="M11.6 5.4 L18 4.6 Q19.4 9.6 21 13 L13.6 14.6 Q12 10 11.6 5.4 Z" fill="#3a3848"/>
<path d="M14.4 17.4 L22 15.4 Q24 19.4 26.6 22 L21 25 L14.8 25.2 Q15.6 21.4 14.4 17.4 Z" fill="#45434f"/></svg>
<svg style="position:absolute;left:1818px;top:295px;" width="32" height="28" viewBox="0 0 32 28"><path d="M1.6 5.6 Q9 3.4 14 1.6 Q21 0.6 27.6 1.2 L27.4 3 Q26.6 13 25.4 21.6 Q24.6 24 21 25.2 Q14 27.4 7.4 26.2 Q5.6 25.6 5.2 23.6 Q3.6 14 1.6 5.6 Z" fill="url(#bing)" stroke="#a8d4f4" stroke-width="0.7"/>
<path d="M9 4 Q18 0.8 27.2 1.4 L27 3.4 Q18 6 10.6 5.4 Z" fill="#6fb0ea"/>
<path d="M2 6 Q13 9.6 27 3.4" stroke="#eefaff" stroke-width="1" fill="none"/>
<path d="M26.8 4 Q26 13 24.8 21.6 Q24 24 21 25 L22.6 4.8 Z" fill="#5a6878" fill-opacity="0.45"/>
<ellipse cx="13.4" cy="22" rx="8" ry="3.4" fill="#e4f6ff" fill-opacity="0.85" transform="rotate(-8 13.4 22)"/>
<path d="M13.4 12.4 Q16 8 21.4 9.6 L22.2 7.6 L24 13.6 L17.6 13.6 L19.4 12 Q16.6 11.4 15.4 13.6 Z" fill="#22a822" stroke="#128012" stroke-width="0.5"/>
<path d="M23.4 15.4 Q21 20 15.8 18.6 L15 20.8 L13 14.6 L19.4 14.8 L17.8 16.4 Q20 17 21.4 14.8 Z" fill="#22a822" stroke="#128012" stroke-width="0.5"/></svg>
<svg style="position:absolute;left:1818px;top:328px;" width="33" height="24" viewBox="0 0 33 24"><defs><clipPath id="hcl"><polygon points="0,13 1.4,12 3.8,10 5.2,6.6 6.4,4 7.6,6.4 8.6,8.4 11,10.4 14,10 15.2,8 16.4,4.6 18.6,1.4 20.6,3 21.6,4.4 22.6,8 25,11 27.4,9.4 28.4,9 30,9.6 30.6,11 32,11 32,23 0,23"/></clipPath></defs><g clip-path="url(#hcl)"><rect x="0" y="0" width="2.1" height="23" fill="#000080"/><rect x="1.9" y="0" width="2.2" height="23" fill="#ff00ff"/><rect x="3.9" y="0" width="4.3" height="23" fill="#0000ff"/><rect x="8" y="0" width="3.3000000000000003" height="23" fill="#00ffff"/><rect x="11.1" y="0" width="4.3" height="23" fill="#00f000"/><rect x="15.2" y="0" width="6.1000000000000005" height="23" fill="#ffff00"/><rect x="21.1" y="0" width="4.0" height="23" fill="#800000"/><rect x="24.9" y="0" width="7.3" height="23" fill="#ff0000"/></g><polyline points="0,13 1.4,12 3.8,10 5.2,6.6 6.4,4 7.6,6.4 8.6,8.4 11,10.4 14,10 15.2,8 16.4,4.6 18.6,1.4 20.6,3 21.6,4.4 22.6,8 25,11 27.4,9.4 28.4,9 30,9.6 30.6,11 32,11" fill="none" stroke="#ffff00" stroke-width="1.2"/></svg></div></body></html>
